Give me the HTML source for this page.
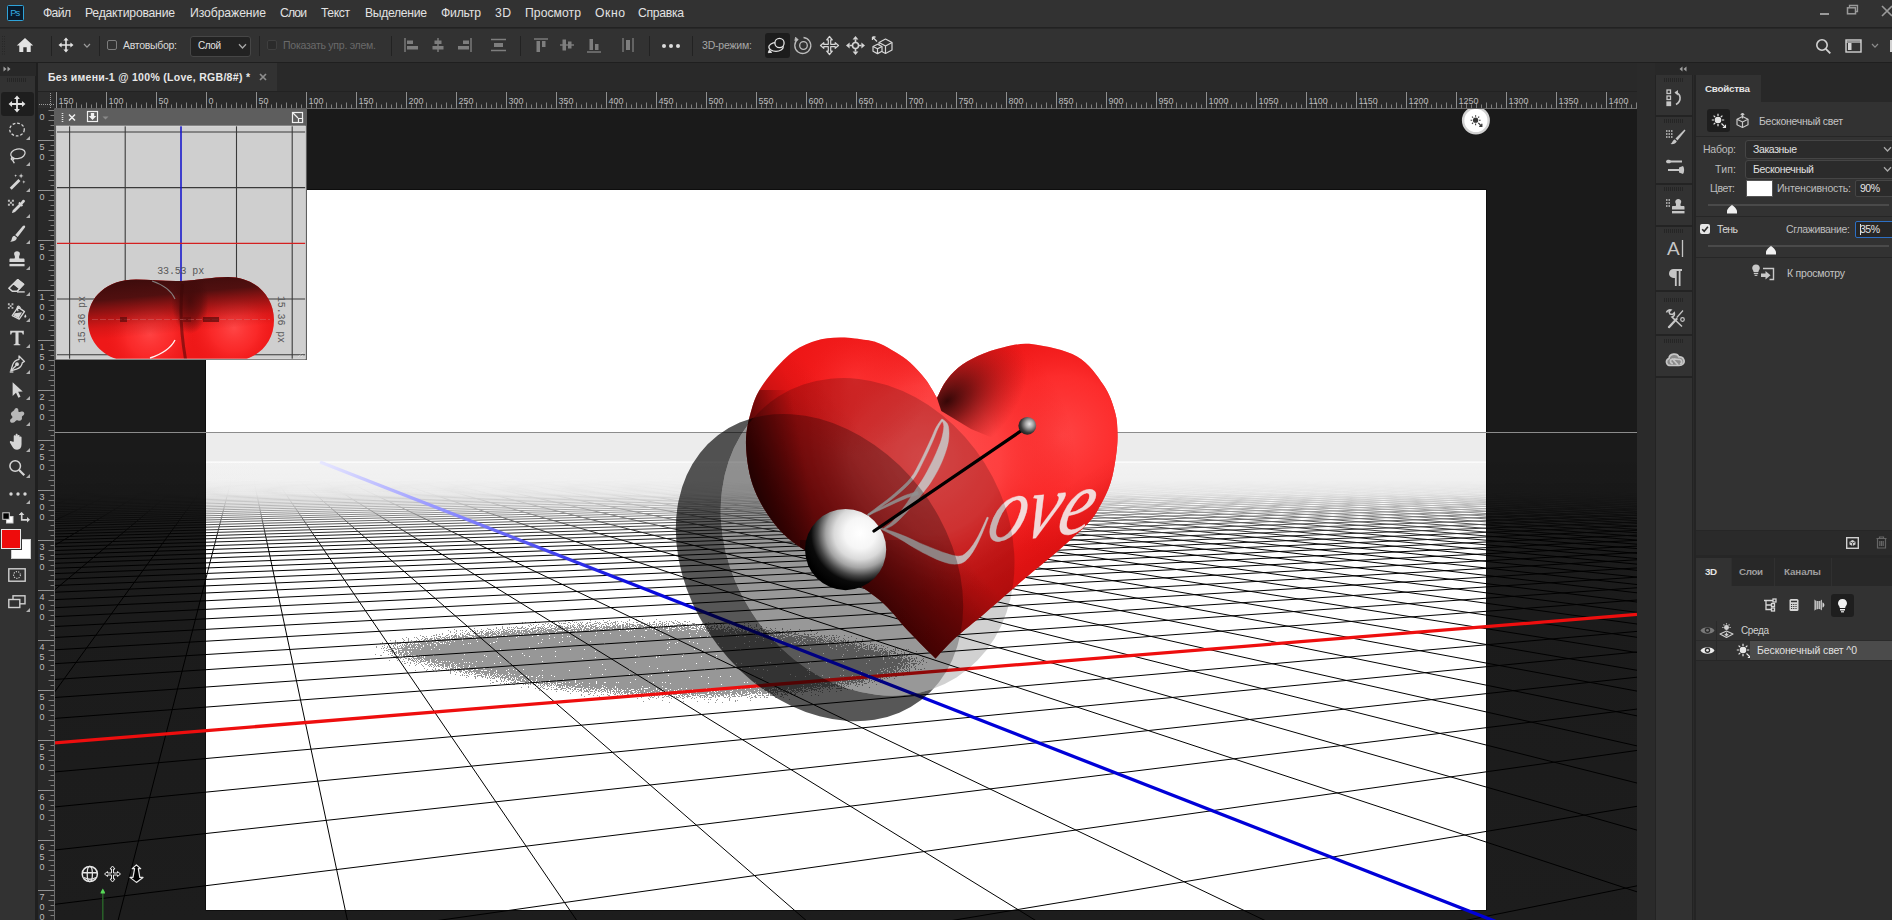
<!DOCTYPE html>
<html><head><meta charset="utf-8"><title>Photoshop</title>
<style>
*{box-sizing:border-box;margin:0;padding:0}
html,body{width:1892px;height:920px;overflow:hidden;background:#282828;font-family:"Liberation Sans",sans-serif;font-size:11px;color:#d6d6d6}
.abs{position:absolute}
.t{position:absolute;white-space:nowrap;line-height:1;transform-origin:0 50%}
.rl{font-family:"Liberation Sans",sans-serif;font-size:9px;fill:#bcbcbc}
#menubar{position:absolute;left:0;top:0;width:1892px;height:28px;background:#323232;border-bottom:1px solid #222}
#optbar{position:absolute;left:0;top:29px;width:1892px;height:34px;background:#323232;border-bottom:1px solid #1f1f1f}
#tabbar{position:absolute;left:36px;top:63px;width:1619px;height:28px;background:#292929}
#tab{position:absolute;left:2px;top:0;width:239px;height:28px;background:#323232}
#tools{position:absolute;left:0;top:63px;width:36px;height:857px;background:#323232}
#toolgap{position:absolute;left:35px;top:63px;width:3px;height:857px;background:#1f1f1f}
.sep{position:absolute;top:36px;width:1px;height:20px;background:#222}
.scene{position:absolute;left:0;top:0}
#rcol{position:absolute;left:1637px;top:63px;width:255px;height:857px;background:#2a2a2a}
</style></head><body>

<svg class="scene" width="1892" height="920" viewBox="0 0 1892 920">
<defs>
<clipPath id="cv"><rect x="55" y="109" width="1582" height="811"/></clipPath>
<clipPath id="doc"><rect x="206" y="190" width="1280" height="720"/></clipPath>
<linearGradient id="fade" x1="0" y1="462" x2="0" y2="552" gradientUnits="userSpaceOnUse">
 <stop offset="0" stop-color="#000"/><stop offset="0.2" stop-color="#060606"/><stop offset="0.35" stop-color="#161616"/><stop offset="0.5" stop-color="#4c4c4c"/><stop offset="0.65" stop-color="#9a9a9a"/><stop offset="0.82" stop-color="#e2e2e2"/><stop offset="1" stop-color="#fff"/></linearGradient>
<mask id="gm" maskUnits="userSpaceOnUse" x="0" y="400" width="1892" height="520"><rect x="0" y="400" width="1892" height="520" fill="url(#fade)"/></mask>
<linearGradient id="haze" x1="0" y1="462" x2="0" y2="520" gradientUnits="userSpaceOnUse">
 <stop offset="0" stop-color="#f2f2f2"/><stop offset="1" stop-color="#ffffff"/></linearGradient>
<linearGradient id="bluefade" x1="320" y1="462" x2="700" y2="610" gradientUnits="userSpaceOnUse">
 <stop offset="0" stop-color="#e8e8ff"/><stop offset="0.35" stop-color="#8a8aff"/><stop offset="0.8" stop-color="#1010e0"/><stop offset="1" stop-color="#0000d8"/></linearGradient>
<linearGradient id="darkground" x1="0" y1="462" x2="0" y2="920" gradientUnits="userSpaceOnUse">
 <stop offset="0" stop-color="#1a1a1a"/><stop offset="1" stop-color="#1d1d1d"/></linearGradient>
</defs>
<g clip-path="url(#cv)">
<rect x="55" y="109" width="1582" height="811" fill="#1a1a1a"/>
<rect x="55" y="462" width="1582" height="458" fill="url(#darkground)"/>
<rect x="205.500" y="189.500" width="1281" height="721" fill="#000"/><rect x="206" y="190" width="1280" height="720" fill="#fff"/>
<rect x="206" y="432" width="1280" height="30" fill="#ececec"/>
<rect x="206" y="462" width="1280" height="60" fill="url(#haze)"/>
<rect x="55" y="432" width="1582" height="1" fill="#8c8c8c"/>
<rect x="206" y="461.5" width="1280" height="1.2" fill="#fff"/>
<defs><filter id="spk" x="300" y="560" width="700" height="200" filterUnits="userSpaceOnUse" color-interpolation-filters="sRGB">
<feGaussianBlur in="SourceAlpha" stdDeviation="16 7" result="b"/>
<feTurbulence type="fractalNoise" baseFrequency="0.85" numOctaves="1" seed="11" result="n"/>
<feColorMatrix in="n" type="matrix" values="0 0 0 0 0  0 0 0 0 0  0 0 0 0 0  1.600 0 0 0 -0.3" result="na"/>
<feComposite in="b" in2="na" operator="arithmetic" k1="0" k2="0.97" k3="1" k4="-0.6" result="c"/>
<feComponentTransfer in="c" result="t"><feFuncA type="discrete" tableValues="0 0 1 1"/></feComponentTransfer>
<feFlood flood-color="#979797"/><feComposite in2="t" operator="in"/>
</filter></defs>
<g filter="url(#spk)"><path d="M368 648C470 626 600 620 690 624C790 628 880 642 932 662C865 692 770 699 690 698C570 696 445 676 368 648Z" fill="#000"/></g>
<g mask="url(#gm)"><path d="M243.5 432.0L-3000.0 524.7M243.5 432.0L-3000.0 525.9M243.5 432.0L-3000.0 527.2M243.5 432.0L-3000.0 528.5M243.5 432.0L-3000.0 529.9M243.5 432.0L-3000.0 531.3M243.5 432.0L-3000.0 532.8M243.5 432.0L-3000.0 534.3M243.5 432.0L-3000.0 535.8M243.5 432.0L-3000.0 537.4M243.5 432.0L-3000.0 539.0M243.5 432.0L-3000.0 540.7M243.5 432.0L-3000.0 542.4M243.5 432.0L-3000.0 544.2M243.5 432.0L-3000.0 546.1M243.5 432.0L-3000.0 548.0M243.5 432.0L-3000.0 550.0M243.5 432.0L-3000.0 552.0M243.5 432.0L-3000.0 554.1M243.5 432.0L-3000.0 556.3M243.5 432.0L-3000.0 558.6M243.5 432.0L-3000.0 561.0M243.5 432.0L-3000.0 563.4M243.5 432.0L-3000.0 566.0M243.5 432.0L-3000.0 568.6M243.5 432.0L-3000.0 571.4M243.5 432.0L-3000.0 574.3M243.5 432.0L-3000.0 577.3M243.5 432.0L-3000.0 580.4M243.5 432.0L-3000.0 583.6M243.5 432.0L-3000.0 587.0M243.5 432.0L-3000.0 590.6M243.5 432.0L-3000.0 594.3M243.5 432.0L-3000.0 598.2M243.5 432.0L-3000.0 602.3M243.5 432.0L-3000.0 606.7M243.5 432.0L-3000.0 611.2M243.5 432.0L-3000.0 616.0M243.5 432.0L-3000.0 621.0M243.5 432.0L-3000.0 626.3M243.5 432.0L-3000.0 631.9M243.5 432.0L-3000.0 637.9M243.5 432.0L-3000.0 644.2M243.5 432.0L-3000.0 650.9M243.5 432.0L-3000.0 658.1M243.5 432.0L-3000.0 665.8M243.5 432.0L-3000.0 674.0M243.5 432.0L-3000.0 682.7M243.5 432.0L-3000.0 692.2M243.5 432.0L-3000.0 702.4M243.5 432.0L-3000.0 713.4M243.5 432.0L-3000.0 725.3M243.5 432.0L-3000.0 738.3M243.5 432.0L-3000.0 752.6M243.5 432.0L-3000.0 768.2M243.5 432.0L-3000.0 785.4M243.5 432.0L-3000.0 804.4M243.5 432.0L-3000.0 825.6M243.5 432.0L-3000.0 849.4M243.5 432.0L-3000.0 876.3M243.5 432.0L-3000.0 906.8M243.5 432.0L-2924.6 930.0M243.5 432.0L-2690.7 930.0M243.5 432.0L-2456.9 930.0M243.5 432.0L-2223.0 930.0M243.5 432.0L-1989.1 930.0M243.5 432.0L-1755.3 930.0M243.5 432.0L-1521.4 930.0M243.5 432.0L-1287.6 930.0M243.5 432.0L-1053.7 930.0M243.5 432.0L-819.8 930.0M243.5 432.0L-586.0 930.0M243.5 432.0L-352.1 930.0M243.5 432.0L-118.3 930.0M243.5 432.0L115.6 930.0M243.5 432.0L349.5 930.0M243.5 432.0L583.3 930.0M243.5 432.0L817.2 930.0M243.5 432.0L1051.1 930.0M243.5 432.0L1284.9 930.0M243.5 432.0L1518.8 930.0M243.5 432.0L1752.6 930.0M243.5 432.0L1986.5 930.0M243.5 432.0L2220.4 930.0M243.5 432.0L2454.2 930.0M243.5 432.0L2688.1 930.0M243.5 432.0L2921.9 930.0M243.5 432.0L3155.8 930.0M243.5 432.0L3389.7 930.0M243.5 432.0L3623.5 930.0M243.5 432.0L3857.4 930.0M243.5 432.0L4091.3 930.0M243.5 432.0L4325.1 930.0M243.5 432.0L4559.0 930.0M243.5 432.0L4792.8 930.0M243.5 432.0L5026.7 930.0M243.5 432.0L5260.6 930.0M243.5 432.0L5494.4 930.0M243.5 432.0L5728.3 930.0M243.5 432.0L5962.1 930.0M243.5 432.0L6000.0 913.6M243.5 432.0L6000.0 895.4M243.5 432.0L6000.0 878.5M243.5 432.0L6000.0 862.8M243.5 432.0L6000.0 848.2M243.5 432.0L6000.0 834.5M243.5 432.0L6000.0 821.7M243.5 432.0L6000.0 809.7M243.5 432.0L6000.0 798.4M243.5 432.0L6000.0 787.8M243.5 432.0L6000.0 777.8M243.5 432.0L6000.0 768.3M243.5 432.0L6000.0 759.3M243.5 432.0L6000.0 750.8M243.5 432.0L6000.0 742.7M243.5 432.0L6000.0 735.0M243.5 432.0L6000.0 727.7M243.5 432.0L6000.0 720.7M243.5 432.0L6000.0 714.1M243.5 432.0L6000.0 707.8M243.5 432.0L6000.0 701.7M243.5 432.0L6000.0 695.9M243.5 432.0L6000.0 690.3M243.5 432.0L6000.0 685.0M243.5 432.0L6000.0 679.9M243.5 432.0L6000.0 675.0M243.5 432.0L6000.0 670.2M243.5 432.0L6000.0 665.7M243.5 432.0L6000.0 661.3M243.5 432.0L6000.0 657.1M243.5 432.0L6000.0 653.1M243.5 432.0L6000.0 649.1M243.5 432.0L6000.0 645.4M243.5 432.0L6000.0 641.7M243.5 432.0L6000.0 638.2M243.5 432.0L6000.0 634.8M243.5 432.0L6000.0 631.5M243.5 432.0L6000.0 628.3M243.5 432.0L6000.0 625.2M243.5 432.0L6000.0 622.2M243.5 432.0L6000.0 619.3M243.5 432.0L6000.0 616.5M243.5 432.0L6000.0 613.7M243.5 432.0L6000.0 611.1M243.5 432.0L6000.0 608.5M243.5 432.0L6000.0 606.0M243.5 432.0L6000.0 603.6M243.5 432.0L6000.0 601.2M243.5 432.0L6000.0 598.9M243.5 432.0L6000.0 596.6M243.5 432.0L6000.0 594.5M243.5 432.0L6000.0 592.3M243.5 432.0L6000.0 590.3M243.5 432.0L6000.0 588.2M243.5 432.0L6000.0 586.3M243.5 432.0L6000.0 584.4M243.5 432.0L6000.0 582.5M243.5 432.0L6000.0 580.7M243.5 432.0L6000.0 578.9M243.5 432.0L6000.0 577.1M243.5 432.0L6000.0 575.5M0.0 460.0L1700.0 447.7M0.0 460.2L1700.0 447.9M0.0 460.4L1700.0 448.0M0.0 460.7L1700.0 448.1M0.0 460.9L1700.0 448.2M0.0 461.1L1700.0 448.4M0.0 461.4L1700.0 448.5M0.0 461.6L1700.0 448.6M0.0 461.8L1700.0 448.8M0.0 462.1L1700.0 448.9M0.0 462.3L1700.0 449.0M0.0 462.6L1700.0 449.2M0.0 462.8L1700.0 449.3M0.0 463.1L1700.0 449.5M0.0 463.3L1700.0 449.6M0.0 463.6L1700.0 449.8M0.0 463.9L1700.0 449.9M0.0 464.2L1700.0 450.1M0.0 464.5L1700.0 450.2M0.0 464.7L1700.0 450.4M0.0 465.0L1700.0 450.6M0.0 465.3L1700.0 450.7M0.0 465.6L1700.0 450.9M0.0 465.9L1700.0 451.1M0.0 466.3L1700.0 451.3M0.0 466.6L1700.0 451.4M0.0 466.9L1700.0 451.6M0.0 467.2L1700.0 451.8M0.0 467.6L1700.0 452.0M0.0 467.9L1700.0 452.2M0.0 468.3L1700.0 452.4M0.0 468.6L1700.0 452.6M0.0 469.0L1700.0 452.8M0.0 469.4L1700.0 453.0M0.0 469.8L1700.0 453.2M0.0 470.2L1700.0 453.4M0.0 470.6L1700.0 453.7M0.0 471.0L1700.0 453.9M0.0 471.4L1700.0 454.1M0.0 471.8L1700.0 454.4M0.0 472.2L1700.0 454.6M0.0 472.7L1700.0 454.9M0.0 473.1L1700.0 455.1M0.0 473.6L1700.0 455.4M0.0 474.1L1700.0 455.6M0.0 474.6L1700.0 455.9M0.0 475.1L1700.0 456.2M0.0 475.6L1700.0 456.5M0.0 476.1L1700.0 456.8M0.0 476.6L1700.0 457.1M0.0 477.2L1700.0 457.4M0.0 477.7L1700.0 457.7M0.0 478.3L1700.0 458.0M0.0 478.9L1700.0 458.4M0.0 479.5L1700.0 458.7M0.0 480.1L1700.0 459.0M0.0 480.7L1700.0 459.4M0.0 481.4L1700.0 459.8M0.0 482.1L1700.0 460.1M0.0 482.8L1700.0 460.5M0.0 483.5L1700.0 460.9M0.0 484.2L1700.0 461.3M0.0 484.9L1700.0 461.8M0.0 485.7L1700.0 462.2M0.0 486.5L1700.0 462.6M0.0 487.3L1700.0 463.1M0.0 488.2L1700.0 463.6M0.0 489.0L1700.0 464.1M0.0 489.9L1700.0 464.6M0.0 490.8L1700.0 465.1M0.0 491.8L1700.0 465.6M0.0 492.8L1700.0 466.2M0.0 493.8L1700.0 466.7M0.0 494.9L1700.0 467.3M0.0 495.9L1700.0 467.9M0.0 497.1L1700.0 468.6M0.0 498.2L1700.0 469.2M0.0 499.5L1700.0 469.9M0.0 500.7L1700.0 470.6M0.0 502.0L1700.0 471.4M0.0 503.4L1700.0 472.1M0.0 504.8L1700.0 472.9M0.0 506.2L1700.0 473.7M0.0 507.8L1700.0 474.6M0.0 509.4L1700.0 475.5M0.0 511.0L1700.0 476.4M0.0 512.7L1700.0 477.4M0.0 514.5L1700.0 478.4M0.0 516.4L1700.0 479.5M0.0 518.4L1700.0 480.6M0.0 520.5L1700.0 481.7M0.0 522.7L1700.0 483.0M0.0 524.9L1700.0 484.2M0.0 527.3L1700.0 485.6M0.0 529.9L1700.0 487.0M0.0 532.5L1700.0 488.5M0.0 535.4L1700.0 490.1M0.0 538.3L1700.0 491.8M0.0 541.5L1700.0 493.5M0.0 544.8L1700.0 495.4M0.0 548.4L1700.0 497.4M0.0 552.2L1700.0 499.6M0.0 556.2L1700.0 501.8M0.0 560.6L1700.0 504.3M0.0 565.2L1700.0 506.9M0.0 570.2L1700.0 509.7M0.0 575.6L1700.0 512.7M0.0 581.4L1700.0 516.0M0.0 587.7L1700.0 519.5M0.0 594.5L1700.0 523.4M0.0 602.0L1700.0 527.6M0.0 610.2L1700.0 532.2M0.0 619.3L1700.0 537.3M0.0 629.3L1700.0 542.9M0.0 640.4L1700.0 549.2M0.0 652.9L1700.0 556.2M0.0 667.0L1700.0 564.1M0.0 683.0L1700.0 573.1M0.0 701.3L1700.0 583.4M0.0 722.5L1700.0 595.3M0.0 747.3L1700.0 609.2M0.0 776.8L1700.0 625.8M0.0 812.3L1700.0 645.8M0.0 856.0L1700.0 670.3M0.0 911.1L1700.0 701.3M0.0 982.6L1700.0 741.5M0.0 1079.2L1700.0 795.8M0.0 1216.8L1700.0 873.1M0.0 1428.8L1700.0 992.3M0.0 1797.8L1700.0 1199.7M0.0 2600.5L1700.0 1650.9M0.0 5691.2L1700.0 3388.1" stroke="#000" stroke-width="1" fill="none"/></g>
<path d="M55 742.9L1637 614.4" stroke="#ee0e0e" stroke-width="3.3" fill="none"/>
<path d="M320 462L1530 934.9" stroke="url(#bluefade)" stroke-width="3.3" fill="none"/>
<defs>
<clipPath id="hc"><path d="M937.0 398.0C938.4 395.4 941.7 387.2 945.2 382.2C948.7 377.2 952.8 372.2 958.2 367.8C963.6 363.4 970.2 359.4 977.8 356.0C985.4 352.6 994.7 349.1 1003.9 347.2C1013.1 345.2 1020.8 342.8 1033.0 344.3C1045.2 345.9 1065.2 349.7 1077.0 356.5C1088.8 363.3 1097.2 375.8 1103.5 385.0C1109.8 394.2 1112.7 403.8 1115.0 412.0C1117.3 420.2 1117.3 426.7 1117.5 434.0C1117.7 441.3 1117.2 447.8 1116.0 456.0C1114.8 464.2 1113.2 474.7 1110.5 483.0C1107.8 491.3 1103.8 499.2 1100.0 506.0C1096.2 512.8 1095.0 515.8 1087.8 523.5C1080.5 531.2 1066.9 543.1 1056.5 552.2C1046.1 561.3 1036.9 568.3 1025.2 578.3C1013.5 588.3 997.8 602.2 986.1 612.2C974.4 622.2 963.2 630.6 954.8 638.3C946.4 646.0 938.7 655.1 935.5 658.5C930.9 653.8 917.2 640.3 907.8 630.5C898.4 620.7 892.0 610.2 879.0 599.5C866.0 588.8 845.9 576.9 830.0 566.0C814.1 555.1 796.0 546.5 783.5 534.0C771.0 521.5 761.2 505.8 755.0 491.0C748.8 476.2 746.5 458.8 746.0 445.0C745.5 431.2 749.0 418.3 752.0 408.0C755.0 397.7 757.7 392.0 764.0 383.0C770.3 374.0 781.5 361.0 790.0 354.0C798.5 347.0 806.7 343.8 815.0 341.0C823.3 338.2 831.5 337.7 840.0 337.5C848.5 337.3 859.3 339.0 866.0 340.0C872.7 341.0 875.0 341.6 880.0 343.7C885.0 345.8 891.0 349.4 896.0 352.5C901.0 355.6 905.1 358.1 910.0 362.6C914.9 367.1 921.1 373.6 925.6 379.5C930.1 385.4 935.1 394.9 937.0 398.0Z"/></clipPath>
<clipPath id="cY"><ellipse cx="867.6" cy="536.9" rx="138.4" ry="166.3" transform="rotate(-32.3 867.6 536.9)" /></clipPath>
<mask id="mNotY" maskUnits="userSpaceOnUse" x="600" y="300" width="500" height="500"><rect x="600" y="300" width="500" height="500" fill="#fff"/><ellipse cx="867.6" cy="536.9" rx="138.4" ry="166.3" transform="rotate(-32.3 867.6 536.9)" fill="#000"/></mask>
<radialGradient id="hlR" cx="1062" cy="436" r="120" gradientUnits="userSpaceOnUse"><stop offset="0" stop-color="#ff4444"/><stop offset="0.5" stop-color="#ff3030" stop-opacity=".85"/><stop offset="1" stop-color="#f01818" stop-opacity="0"/></radialGradient>
<radialGradient id="hlL" cx="925" cy="460" r="150" gradientUnits="userSpaceOnUse"><stop offset="0" stop-color="#ff5858"/><stop offset="0.5" stop-color="#ff4444" stop-opacity=".85"/><stop offset="1" stop-color="#f01818" stop-opacity="0"/></radialGradient>
<radialGradient id="hlT" cx="855" cy="380" r="75" gradientUnits="userSpaceOnUse"><stop offset="0" stop-color="#ff3434" stop-opacity=".7"/><stop offset="1" stop-color="#f01818" stop-opacity="0"/></radialGradient>
<linearGradient id="shL" x1="756" y1="585" x2="930" y2="440" gradientUnits="userSpaceOnUse"><stop offset="0" stop-color="#1c0000" stop-opacity=".82"/><stop offset="0.25" stop-color="#2a0000" stop-opacity=".62"/><stop offset="0.5" stop-color="#400000" stop-opacity=".3"/><stop offset="0.7" stop-color="#500000" stop-opacity=".06"/><stop offset="0.8" stop-color="#500000" stop-opacity="0"/></linearGradient>
<linearGradient id="shT" x1="905" y1="665" x2="985" y2="580" gradientUnits="userSpaceOnUse"><stop offset="0" stop-color="#1a0000" stop-opacity=".6"/><stop offset="0.5" stop-color="#300000" stop-opacity=".3"/><stop offset="1" stop-color="#400000" stop-opacity="0"/></linearGradient>
<linearGradient id="shE" x1="746" y1="450" x2="800" y2="440" gradientUnits="userSpaceOnUse"><stop offset="0" stop-color="#100000" stop-opacity=".6"/><stop offset="1" stop-color="#100000" stop-opacity="0"/></linearGradient>
<radialGradient id="shC" cx="947" cy="401" r="92" gradientUnits="userSpaceOnUse" gradientTransform="rotate(-38 947 401) scale(1 0.62) translate(0 246)"><stop offset="0" stop-color="#240202" stop-opacity=".92"/><stop offset="0.3" stop-color="#4a0505" stop-opacity=".7"/><stop offset="0.65" stop-color="#700808" stop-opacity=".35"/><stop offset="1" stop-color="#8a0a0a" stop-opacity="0"/></radialGradient>
<clipPath id="rl"><path d="M937 398L941.300 411L971 429L1000 441L1060 450V330H937Z"/></clipPath>
<linearGradient id="shB" x1="1010" y1="520" x2="1060" y2="600" gradientUnits="userSpaceOnUse"><stop offset="0" stop-color="#900000" stop-opacity="0"/><stop offset="1" stop-color="#900000" stop-opacity=".35"/></linearGradient>
<radialGradient id="sph" cx="0.68" cy="0.3" r="0.73" fx="0.68" fy="0.3"><stop offset="0" stop-color="#ffffff"/><stop offset="0.26" stop-color="#f6f6f6"/><stop offset="0.44" stop-color="#dadada"/><stop offset="0.58" stop-color="#a4a4a4"/><stop offset="0.72" stop-color="#444"/><stop offset="0.83" stop-color="#0a0a0a"/><stop offset="1" stop-color="#000"/></radialGradient>
<radialGradient id="sph2" cx="0.62" cy="0.4" r="0.7" fx="0.62" fy="0.4"><stop offset="0" stop-color="#e6e6e6"/><stop offset="0.3" stop-color="#a8a8a8"/><stop offset="0.7" stop-color="#3a3a3a"/><stop offset="1" stop-color="#141414"/></radialGradient>
</defs>
<path d="M937.0 398.0C938.4 395.4 941.7 387.2 945.2 382.2C948.7 377.2 952.8 372.2 958.2 367.8C963.6 363.4 970.2 359.4 977.8 356.0C985.4 352.6 994.7 349.1 1003.9 347.2C1013.1 345.2 1020.8 342.8 1033.0 344.3C1045.2 345.9 1065.2 349.7 1077.0 356.5C1088.8 363.3 1097.2 375.8 1103.5 385.0C1109.8 394.2 1112.7 403.8 1115.0 412.0C1117.3 420.2 1117.3 426.7 1117.5 434.0C1117.7 441.3 1117.2 447.8 1116.0 456.0C1114.8 464.2 1113.2 474.7 1110.5 483.0C1107.8 491.3 1103.8 499.2 1100.0 506.0C1096.2 512.8 1095.0 515.8 1087.8 523.5C1080.5 531.2 1066.9 543.1 1056.5 552.2C1046.1 561.3 1036.9 568.3 1025.2 578.3C1013.5 588.3 997.8 602.2 986.1 612.2C974.4 622.2 963.2 630.6 954.8 638.3C946.4 646.0 938.7 655.1 935.5 658.5C930.9 653.8 917.2 640.3 907.8 630.5C898.4 620.7 892.0 610.2 879.0 599.5C866.0 588.8 845.9 576.9 830.0 566.0C814.1 555.1 796.0 546.5 783.5 534.0C771.0 521.5 761.2 505.8 755.0 491.0C748.8 476.2 746.5 458.8 746.0 445.0C745.5 431.2 749.0 418.3 752.0 408.0C755.0 397.7 757.7 392.0 764.0 383.0C770.3 374.0 781.5 361.0 790.0 354.0C798.5 347.0 806.7 343.8 815.0 341.0C823.3 338.2 831.5 337.7 840.0 337.5C848.5 337.3 859.3 339.0 866.0 340.0C872.7 341.0 875.0 341.6 880.0 343.7C885.0 345.8 891.0 349.4 896.0 352.5C901.0 355.6 905.1 358.1 910.0 362.6C914.9 367.1 921.1 373.6 925.6 379.5C930.1 385.4 935.1 394.9 937.0 398.0Z" fill="#ee1616"/>
<g clip-path="url(#hc)">
<rect x="740" y="330" width="390" height="340" fill="url(#hlR)"/>
<rect x="740" y="330" width="390" height="340" fill="url(#hlL)"/>
<rect x="740" y="330" width="390" height="340" fill="url(#hlT)"/>
<rect x="740" y="330" width="390" height="340" fill="url(#shL)"/>
<rect x="740" y="390" width="80" height="200" fill="url(#shE)"/>
<rect x="800" y="540" width="250" height="130" fill="url(#shT)"/>
<g clip-path="url(#rl)"><rect x="740" y="330" width="390" height="340" fill="url(#shC)"/></g>
<rect x="740" y="330" width="390" height="340" fill="url(#shB)"/>
<g fill="#f2f2f2" fill-opacity=".88" stroke="#f2f2f2" stroke-opacity=".5" stroke-width=".8">
<text transform="translate(984 542) rotate(-5.5) skewX(-21)" font-family="Liberation Serif" font-style="italic" font-size="90" textLength="104" lengthAdjust="spacingAndGlyphs">ove</text>
<path d="M868.5 515.7C870.5 514.3 876.1 510.7 880.7 507.4C885.2 504.1 890.5 500.6 895.9 496.0C901.2 491.4 908.2 485.6 912.8 479.9C917.4 474.1 920.0 468.0 923.2 461.6C926.5 455.3 930.0 447.4 932.5 441.8C934.9 436.3 936.3 432.1 938.0 428.5C939.7 424.9 942.1 421.4 942.9 420.0L941.5 419.2C940.6 420.6 937.9 423.9 936.0 427.5C934.1 431.1 932.7 435.3 930.1 440.8C927.6 446.2 924.0 454.1 920.8 460.4C917.5 466.6 915.0 472.5 910.6 478.1C906.2 483.7 899.4 489.4 894.1 494.0C888.9 498.6 883.8 502.2 879.3 505.6C874.9 509.0 869.5 512.9 867.5 514.3Z"/>
<path d="M917.5 491.4C915.1 492.2 908.8 493.8 903.4 496.1C898.1 498.4 891.5 502.0 885.5 505.0C879.6 508.1 870.7 512.8 867.7 514.4L868.3 515.6C871.3 514.2 880.4 509.8 886.5 507.0C892.5 504.2 899.2 501.0 904.6 498.9C909.9 496.8 916.2 495.3 918.5 494.6Z"/>
<path d="M941.6 420.0C941.9 421.0 943.8 423.1 943.8 426.3C943.8 429.5 942.8 434.8 941.5 439.3C940.2 443.8 937.9 449.0 936.0 453.4C934.1 457.9 932.1 461.8 930.0 465.9C927.9 470.1 925.9 473.9 923.4 478.1C920.9 482.2 917.6 486.7 914.9 490.8C912.2 494.8 909.9 498.4 907.2 502.4C904.4 506.4 901.0 511.1 898.4 514.5C895.7 517.9 893.7 520.4 891.3 522.7C888.8 525.0 884.9 527.4 883.6 528.3L884.4 529.7C885.9 528.9 890.3 527.1 893.1 525.1C896.0 523.0 898.5 520.6 901.6 517.5C904.8 514.3 908.8 509.9 912.0 506.2C915.3 502.5 918.0 499.2 921.1 495.2C924.2 491.3 927.8 486.9 930.6 482.7C933.4 478.5 935.8 474.4 938.0 470.1C940.2 465.7 942.2 461.5 944.0 456.6C945.8 451.7 947.8 445.9 948.5 440.7C949.2 435.6 949.2 429.3 948.2 425.7C947.3 422.1 943.7 420.3 942.8 419.2Z"/>
<path d="M879.7 528.6C881.7 529.6 887.3 532.3 891.4 534.5C895.4 536.6 899.9 539.0 904.0 541.4C908.2 543.9 912.2 546.7 916.4 549.1C920.7 551.6 925.4 554.0 929.6 556.0C933.8 558.1 937.7 559.9 941.5 561.2C945.3 562.6 949.0 563.8 952.4 564.1C955.8 564.3 959.3 564.0 962.0 563.0C964.6 562.0 966.4 560.0 968.3 558.0C970.3 555.9 972.0 553.3 973.6 550.7C975.3 548.0 976.8 545.2 978.3 542.0C979.9 538.8 981.3 535.5 983.0 531.5C984.7 527.4 987.6 520.0 988.5 517.7L987.1 517.1C986.1 519.3 982.9 526.6 981.0 530.5C979.1 534.5 977.5 537.6 975.7 540.6C973.9 543.6 972.2 546.1 970.4 548.3C968.5 550.6 966.4 552.7 964.7 554.0C963.0 555.3 961.9 555.8 960.0 556.0C958.2 556.3 956.2 556.1 953.6 555.5C951.0 555.0 947.9 554.0 944.5 552.8C941.1 551.6 937.1 550.0 933.0 548.4C928.8 546.7 924.0 544.8 919.6 542.9C915.1 540.9 910.9 538.7 906.4 536.8C901.9 534.9 897.0 533.1 892.6 531.5C888.3 530.0 882.3 528.1 880.3 527.4Z"/>
</g>
</g>
<ellipse cx="867.6" cy="536.9" rx="138.4" ry="166.3" transform="rotate(-32.3 867.6 536.9)" fill="#000" fill-opacity=".18"/>
<g clip-path="url(#cY)"><ellipse cx="819.5" cy="567.6" rx="128.1" ry="166.9" transform="rotate(-37.5 819.5 567.6)" fill="#000" fill-opacity=".27"/></g>
<g mask="url(#mNotY)"><ellipse cx="819.5" cy="567.6" rx="128.1" ry="166.9" transform="rotate(-37.5 819.5 567.6)" fill="#000" fill-opacity=".66"/></g>
<circle cx="845.600" cy="549.600" r="40.600" fill="url(#sph)"/>
<path d="M874 531L1026 427.500" stroke="#000" stroke-width="3.200" stroke-linecap="round"/>
<circle cx="1027.300" cy="425.800" r="8.900" fill="url(#sph2)"/><circle cx="1475.900" cy="120.500" r="12.800" fill="#ffffff" stroke="#d2d2d2" stroke-width="2.400"/>
<g stroke="#3a3a3a" stroke-width="1.100"><circle cx="1475.600" cy="120.200" r="2.100" fill="#333"/><path d="M1475.600 115.200V116.800M1475.600 123.600V125.200M1470.600 120.200H1472.200M1479 120.200H1480.600M1472 116.600L1473.100 117.700M1479.200 116.600L1478.100 117.700M1472 123.800L1473.100 122.700"/><path d="M1478.300 122.900L1481.600 126.200M1481.800 123.800V126.400H1479.200" stroke-width="1.300" fill="none"/></g>
<g fill="none" stroke="#e6e6e6" stroke-width="1.200"><circle cx="89.800" cy="874" r="7.600" stroke-width="1.500"/><ellipse cx="89.800" cy="874" rx="2.600" ry="7.600" stroke-width="1.300"/><path d="M82.500 872.800H97M84 877.500C87.500 879.500 92.500 879.500 96 877.500" stroke-width="1.400"/></g>
<g fill="none" stroke="#e6e6e6" stroke-width="1" stroke-linejoin="round"><path d="M112.500 866L115 869H113.500V873H117.500V871.500L120.500 874L117.500 876.500V875H113.500V879H115L112.500 882L110 879H111.500V875H107.500V876.500L104.500 874L107.500 871.500V873H111.500V869H110Z"/></g>
<path d="M136.400 864.900L140.700 868.700H138.300L139.800 877.400H143L136.400 882.400L130 877.400H133L134.600 868.700H132.200Z" fill="#000" stroke="#e6e6e6" stroke-width="1.200" stroke-linejoin="round"/>
<path d="M102.800 892V920" stroke="#2a662a" stroke-width="1.400"/><path d="M102.800 888.500C104 890.500 105.200 892 105 893.500H100.600C100.400 892 101.600 890.500 102.800 888.500Z" fill="#58d858"/>
</g>
</svg>
<svg class="abs" style="left:38px;top:91px" width="1599" height="18" viewBox="38 91 1599 18">
<rect x="38" y="91" width="1599" height="18" fill="#292929"/>
<rect x="38" y="91" width="1599" height="1" fill="#222"/>
<rect x="38" y="92" width="16.500" height="16" fill="#2e2e2e"/>
<rect x="54.500" y="108" width="1582.500" height="1" fill="#6c6c6c"/>
<path d="M39 104.500H54M50.500 93V108" stroke="#9a9a9a" stroke-width="1" stroke-dasharray="1 1" fill="none"/>
<path d="M56.500 92V108M106.500 92V108M156.500 92V108M206.500 92V108M256.500 92V108M306.500 92V108M356.500 92V108M406.500 92V108M456.500 92V108M506.500 92V108M556.500 92V108M606.500 92V108M656.500 92V108M706.500 92V108M756.500 92V108M806.500 92V108M856.500 92V108M906.500 92V108M956.500 92V108M1006.500 92V108M1056.500 92V108M1106.500 92V108M1156.500 92V108M1206.500 92V108M1256.500 92V108M1306.500 92V108M1356.500 92V108M1406.500 92V108M1456.500 92V108M1506.500 92V108M1556.500 92V108M1606.500 92V108" stroke="#8e8e8e" stroke-width="1"/>
<path d="M66.500 102.500V108M76.500 102.500V108M86.500 102.500V108M96.500 102.500V108M116.500 102.500V108M126.500 102.500V108M136.500 102.500V108M146.500 102.500V108M166.500 102.500V108M176.500 102.500V108M186.500 102.500V108M196.500 102.500V108M216.500 102.500V108M226.500 102.500V108M236.500 102.500V108M246.500 102.500V108M266.500 102.500V108M276.500 102.500V108M286.500 102.500V108M296.500 102.500V108M316.500 102.500V108M326.500 102.500V108M336.500 102.500V108M346.500 102.500V108M366.500 102.500V108M376.500 102.500V108M386.500 102.500V108M396.500 102.500V108M416.500 102.500V108M426.500 102.500V108M436.500 102.500V108M446.500 102.500V108M466.500 102.500V108M476.500 102.500V108M486.500 102.500V108M496.500 102.500V108M516.500 102.500V108M526.500 102.500V108M536.500 102.500V108M546.500 102.500V108M566.500 102.500V108M576.500 102.500V108M586.500 102.500V108M596.500 102.500V108M616.500 102.500V108M626.500 102.500V108M636.500 102.500V108M646.500 102.500V108M666.500 102.500V108M676.500 102.500V108M686.500 102.500V108M696.500 102.500V108M716.500 102.500V108M726.500 102.500V108M736.500 102.500V108M746.500 102.500V108M766.500 102.500V108M776.500 102.500V108M786.500 102.500V108M796.500 102.500V108M816.500 102.500V108M826.500 102.500V108M836.500 102.500V108M846.500 102.500V108M866.500 102.500V108M876.500 102.500V108M886.500 102.500V108M896.500 102.500V108M916.500 102.500V108M926.500 102.500V108M936.500 102.500V108M946.500 102.500V108M966.500 102.500V108M976.500 102.500V108M986.500 102.500V108M996.500 102.500V108M1016.500 102.500V108M1026.500 102.500V108M1036.500 102.500V108M1046.500 102.500V108M1066.500 102.500V108M1076.500 102.500V108M1086.500 102.500V108M1096.500 102.500V108M1116.500 102.500V108M1126.500 102.500V108M1136.500 102.500V108M1146.500 102.500V108M1166.500 102.500V108M1176.500 102.500V108M1186.500 102.500V108M1196.500 102.500V108M1216.500 102.500V108M1226.500 102.500V108M1236.500 102.500V108M1246.500 102.500V108M1266.500 102.500V108M1276.500 102.500V108M1286.500 102.500V108M1296.500 102.500V108M1316.500 102.500V108M1326.500 102.500V108M1336.500 102.500V108M1346.500 102.500V108M1366.500 102.500V108M1376.500 102.500V108M1386.500 102.500V108M1396.500 102.500V108M1416.500 102.500V108M1426.500 102.500V108M1436.500 102.500V108M1446.500 102.500V108M1466.500 102.500V108M1476.500 102.500V108M1486.500 102.500V108M1496.500 102.500V108M1516.500 102.500V108M1526.500 102.500V108M1536.500 102.500V108M1546.500 102.500V108M1566.500 102.500V108M1576.500 102.500V108M1586.500 102.500V108M1596.500 102.500V108M1616.500 102.500V108M1626.500 102.500V108M1636.500 102.500V108M61.500 104.500V108M71.500 104.500V108M81.500 104.500V108M91.500 104.500V108M101.500 104.500V108M111.500 104.500V108M121.500 104.500V108M131.500 104.500V108M141.500 104.500V108M151.500 104.500V108M161.500 104.500V108M171.500 104.500V108M181.500 104.500V108M191.500 104.500V108M201.500 104.500V108M211.500 104.500V108M221.500 104.500V108M231.500 104.500V108M241.500 104.500V108M251.500 104.500V108M261.500 104.500V108M271.500 104.500V108M281.500 104.500V108M291.500 104.500V108M301.500 104.500V108M311.500 104.500V108M321.500 104.500V108M331.500 104.500V108M341.500 104.500V108M351.500 104.500V108M361.500 104.500V108M371.500 104.500V108M381.500 104.500V108M391.500 104.500V108M401.500 104.500V108M411.500 104.500V108M421.500 104.500V108M431.500 104.500V108M441.500 104.500V108M451.500 104.500V108M461.500 104.500V108M471.500 104.500V108M481.500 104.500V108M491.500 104.500V108M501.500 104.500V108M511.500 104.500V108M521.500 104.500V108M531.500 104.500V108M541.500 104.500V108M551.500 104.500V108M561.500 104.500V108M571.500 104.500V108M581.500 104.500V108M591.500 104.500V108M601.500 104.500V108M611.500 104.500V108M621.500 104.500V108M631.500 104.500V108M641.500 104.500V108M651.500 104.500V108M661.500 104.500V108M671.500 104.500V108M681.500 104.500V108M691.500 104.500V108M701.500 104.500V108M711.500 104.500V108M721.500 104.500V108M731.500 104.500V108M741.500 104.500V108M751.500 104.500V108M761.500 104.500V108M771.500 104.500V108M781.500 104.500V108M791.500 104.500V108M801.500 104.500V108M811.500 104.500V108M821.500 104.500V108M831.500 104.500V108M841.500 104.500V108M851.500 104.500V108M861.500 104.500V108M871.500 104.500V108M881.500 104.500V108M891.500 104.500V108M901.500 104.500V108M911.500 104.500V108M921.500 104.500V108M931.500 104.500V108M941.500 104.500V108M951.500 104.500V108M961.500 104.500V108M971.500 104.500V108M981.500 104.500V108M991.500 104.500V108M1001.500 104.500V108M1011.500 104.500V108M1021.500 104.500V108M1031.500 104.500V108M1041.500 104.500V108M1051.500 104.500V108M1061.500 104.500V108M1071.500 104.500V108M1081.500 104.500V108M1091.500 104.500V108M1101.500 104.500V108M1111.500 104.500V108M1121.500 104.500V108M1131.500 104.500V108M1141.500 104.500V108M1151.500 104.500V108M1161.500 104.500V108M1171.500 104.500V108M1181.500 104.500V108M1191.500 104.500V108M1201.500 104.500V108M1211.500 104.500V108M1221.500 104.500V108M1231.500 104.500V108M1241.500 104.500V108M1251.500 104.500V108M1261.500 104.500V108M1271.500 104.500V108M1281.500 104.500V108M1291.500 104.500V108M1301.500 104.500V108M1311.500 104.500V108M1321.500 104.500V108M1331.500 104.500V108M1341.500 104.500V108M1351.500 104.500V108M1361.500 104.500V108M1371.500 104.500V108M1381.500 104.500V108M1391.500 104.500V108M1401.500 104.500V108M1411.500 104.500V108M1421.500 104.500V108M1431.500 104.500V108M1441.500 104.500V108M1451.500 104.500V108M1461.500 104.500V108M1471.500 104.500V108M1481.500 104.500V108M1491.500 104.500V108M1501.500 104.500V108M1511.500 104.500V108M1521.500 104.500V108M1531.500 104.500V108M1541.500 104.500V108M1551.500 104.500V108M1561.500 104.500V108M1571.500 104.500V108M1581.500 104.500V108M1591.500 104.500V108M1601.500 104.500V108M1611.500 104.500V108M1621.500 104.500V108M1631.500 104.500V108" stroke="#808080" stroke-width="1"/>
<text x="58.5" y="103.800" class="rl">150</text>
<text x="108.5" y="103.800" class="rl">100</text>
<text x="158.5" y="103.800" class="rl">50</text>
<text x="208.5" y="103.800" class="rl">0</text>
<text x="258.5" y="103.800" class="rl">50</text>
<text x="308.5" y="103.800" class="rl">100</text>
<text x="358.5" y="103.800" class="rl">150</text>
<text x="408.5" y="103.800" class="rl">200</text>
<text x="458.5" y="103.800" class="rl">250</text>
<text x="508.5" y="103.800" class="rl">300</text>
<text x="558.5" y="103.800" class="rl">350</text>
<text x="608.5" y="103.800" class="rl">400</text>
<text x="658.5" y="103.800" class="rl">450</text>
<text x="708.5" y="103.800" class="rl">500</text>
<text x="758.5" y="103.800" class="rl">550</text>
<text x="808.5" y="103.800" class="rl">600</text>
<text x="858.5" y="103.800" class="rl">650</text>
<text x="908.5" y="103.800" class="rl">700</text>
<text x="958.5" y="103.800" class="rl">750</text>
<text x="1008.5" y="103.800" class="rl">800</text>
<text x="1058.5" y="103.800" class="rl">850</text>
<text x="1108.5" y="103.800" class="rl">900</text>
<text x="1158.5" y="103.800" class="rl">950</text>
<text x="1208.5" y="103.800" class="rl">1000</text>
<text x="1258.5" y="103.800" class="rl">1050</text>
<text x="1308.5" y="103.800" class="rl">1100</text>
<text x="1358.5" y="103.800" class="rl">1150</text>
<text x="1408.5" y="103.800" class="rl">1200</text>
<text x="1458.5" y="103.800" class="rl">1250</text>
<text x="1508.5" y="103.800" class="rl">1300</text>
<text x="1558.5" y="103.800" class="rl">1350</text>
<text x="1608.5" y="103.800" class="rl">1400</text>
</svg>
<svg class="abs" style="left:38px;top:109px" width="17" height="811" viewBox="38 109 17 811">
<rect x="38" y="109" width="17" height="811" fill="#292929"/>
<rect x="54" y="109" width="1" height="811" fill="#6c6c6c"/>
<path d="M38 140.500H54M38 190.500H54M38 240.500H54M38 290.500H54M38 340.500H54M38 390.500H54M38 440.500H54M38 490.500H54M38 540.500H54M38 590.500H54M38 640.500H54M38 690.500H54M38 740.500H54M38 790.500H54M38 840.500H54M38 890.500H54" stroke="#8e8e8e" stroke-width="1"/>
<path d="M48.500 110.500H54M50.500 115.500H54M48.500 120.500H54M50.500 125.500H54M48.500 130.500H54M50.500 135.500H54M50.500 145.500H54M48.500 150.500H54M50.500 155.500H54M48.500 160.500H54M50.500 165.500H54M48.500 170.500H54M50.500 175.500H54M48.500 180.500H54M50.500 185.500H54M50.500 195.500H54M48.500 200.500H54M50.500 205.500H54M48.500 210.500H54M50.500 215.500H54M48.500 220.500H54M50.500 225.500H54M48.500 230.500H54M50.500 235.500H54M50.500 245.500H54M48.500 250.500H54M50.500 255.500H54M48.500 260.500H54M50.500 265.500H54M48.500 270.500H54M50.500 275.500H54M48.500 280.500H54M50.500 285.500H54M50.500 295.500H54M48.500 300.500H54M50.500 305.500H54M48.500 310.500H54M50.500 315.500H54M48.500 320.500H54M50.500 325.500H54M48.500 330.500H54M50.500 335.500H54M50.500 345.500H54M48.500 350.500H54M50.500 355.500H54M48.500 360.500H54M50.500 365.500H54M48.500 370.500H54M50.500 375.500H54M48.500 380.500H54M50.500 385.500H54M50.500 395.500H54M48.500 400.500H54M50.500 405.500H54M48.500 410.500H54M50.500 415.500H54M48.500 420.500H54M50.500 425.500H54M48.500 430.500H54M50.500 435.500H54M50.500 445.500H54M48.500 450.500H54M50.500 455.500H54M48.500 460.500H54M50.500 465.500H54M48.500 470.500H54M50.500 475.500H54M48.500 480.500H54M50.500 485.500H54M50.500 495.500H54M48.500 500.500H54M50.500 505.500H54M48.500 510.500H54M50.500 515.500H54M48.500 520.500H54M50.500 525.500H54M48.500 530.500H54M50.500 535.500H54M50.500 545.500H54M48.500 550.500H54M50.500 555.500H54M48.500 560.500H54M50.500 565.500H54M48.500 570.500H54M50.500 575.500H54M48.500 580.500H54M50.500 585.500H54M50.500 595.500H54M48.500 600.500H54M50.500 605.500H54M48.500 610.500H54M50.500 615.500H54M48.500 620.500H54M50.500 625.500H54M48.500 630.500H54M50.500 635.500H54M50.500 645.500H54M48.500 650.500H54M50.500 655.500H54M48.500 660.500H54M50.500 665.500H54M48.500 670.500H54M50.500 675.500H54M48.500 680.500H54M50.500 685.500H54M50.500 695.500H54M48.500 700.500H54M50.500 705.500H54M48.500 710.500H54M50.500 715.500H54M48.500 720.500H54M50.500 725.500H54M48.500 730.500H54M50.500 735.500H54M50.500 745.500H54M48.500 750.500H54M50.500 755.500H54M48.500 760.500H54M50.500 765.500H54M48.500 770.500H54M50.500 775.500H54M48.500 780.500H54M50.500 785.500H54M50.500 795.500H54M48.500 800.500H54M50.500 805.500H54M48.500 810.500H54M50.500 815.500H54M48.500 820.500H54M50.500 825.500H54M48.500 830.500H54M50.500 835.500H54M50.500 845.500H54M48.500 850.500H54M50.500 855.500H54M48.500 860.500H54M50.500 865.500H54M48.500 870.500H54M50.500 875.500H54M48.500 880.500H54M50.500 885.500H54M50.500 895.500H54M48.500 900.500H54M50.500 905.500H54M48.500 910.500H54M50.500 915.500H54M48.500 920.500H54" stroke="#808080" stroke-width="1"/>
<text x="39.500" y="120" class="rl">0</text>
<text x="39.500" y="150" class="rl">5</text>
<text x="39.500" y="160" class="rl">0</text>
<text x="39.500" y="200" class="rl">0</text>
<text x="39.500" y="250" class="rl">5</text>
<text x="39.500" y="260" class="rl">0</text>
<text x="39.500" y="300" class="rl">1</text>
<text x="39.500" y="310" class="rl">0</text>
<text x="39.500" y="320" class="rl">0</text>
<text x="39.500" y="350" class="rl">1</text>
<text x="39.500" y="360" class="rl">5</text>
<text x="39.500" y="370" class="rl">0</text>
<text x="39.500" y="400" class="rl">2</text>
<text x="39.500" y="410" class="rl">0</text>
<text x="39.500" y="420" class="rl">0</text>
<text x="39.500" y="450" class="rl">2</text>
<text x="39.500" y="460" class="rl">5</text>
<text x="39.500" y="470" class="rl">0</text>
<text x="39.500" y="500" class="rl">3</text>
<text x="39.500" y="510" class="rl">0</text>
<text x="39.500" y="520" class="rl">0</text>
<text x="39.500" y="550" class="rl">3</text>
<text x="39.500" y="560" class="rl">5</text>
<text x="39.500" y="570" class="rl">0</text>
<text x="39.500" y="600" class="rl">4</text>
<text x="39.500" y="610" class="rl">0</text>
<text x="39.500" y="620" class="rl">0</text>
<text x="39.500" y="650" class="rl">4</text>
<text x="39.500" y="660" class="rl">5</text>
<text x="39.500" y="670" class="rl">0</text>
<text x="39.500" y="700" class="rl">5</text>
<text x="39.500" y="710" class="rl">0</text>
<text x="39.500" y="720" class="rl">0</text>
<text x="39.500" y="750" class="rl">5</text>
<text x="39.500" y="760" class="rl">5</text>
<text x="39.500" y="770" class="rl">0</text>
<text x="39.500" y="800" class="rl">6</text>
<text x="39.500" y="810" class="rl">0</text>
<text x="39.500" y="820" class="rl">0</text>
<text x="39.500" y="850" class="rl">6</text>
<text x="39.500" y="860" class="rl">5</text>
<text x="39.500" y="870" class="rl">0</text>
<text x="39.500" y="900" class="rl">7</text>
<text x="39.500" y="910" class="rl">0</text>
<text x="39.500" y="920" class="rl">0</text>
</svg>
<svg class="abs" style="left:54px;top:108px" width="254" height="254" viewBox="54 108 254 254">
<defs><clipPath id="sv"><rect x="56.500" y="126" width="249" height="233"/></clipPath>
<radialGradient id="b1" cx="150" cy="334" r="46" gradientUnits="userSpaceOnUse"><stop offset="0" stop-color="#ff4242"/><stop offset="0.5" stop-color="#ff3030" stop-opacity=".7"/><stop offset="1" stop-color="#f01818" stop-opacity="0"/></radialGradient>
<radialGradient id="b2" cx="234" cy="328" r="46" gradientUnits="userSpaceOnUse"><stop offset="0" stop-color="#ff4646"/><stop offset="0.5" stop-color="#ff3030" stop-opacity=".7"/><stop offset="1" stop-color="#f01818" stop-opacity="0"/></radialGradient>
<linearGradient id="bt" x1="181" y1="276" x2="186" y2="332" gradientUnits="userSpaceOnUse"><stop offset="0" stop-color="#3e0c0c"/><stop offset="0.3" stop-color="#4a0f0f" stop-opacity=".96"/><stop offset="0.55" stop-color="#6a1010" stop-opacity=".62"/><stop offset="0.8" stop-color="#801010" stop-opacity=".2"/><stop offset="1" stop-color="#801010" stop-opacity="0"/></linearGradient>
<radialGradient id="bm" cx="190" cy="300" r="34" gradientUnits="userSpaceOnUse" gradientTransform="translate(190 300) scale(.55 1) translate(-190 -300)"><stop offset="0" stop-color="#400a0a" stop-opacity=".85"/><stop offset="0.6" stop-color="#400a0a" stop-opacity=".5"/><stop offset="1" stop-color="#400a0a" stop-opacity="0"/></radialGradient>
</defs>
<path d="M54 360V111Q54 108 57 108H307V360Z" fill="#5e5e5e"/>
<rect x="56.500" y="126" width="249" height="233" fill="#cfcfcf"/>
<g clip-path="url(#sv)">
<path d="M57 132H306M57 187.600H306M57 299H306M57 354.700H306M69.600 126V360M125.200 126V360M236.500 126V360M292.200 126V360" stroke="#3a3a3a" stroke-width="1.1" fill="none"/>
<path d="M181 126V360" stroke="#1a1acc" stroke-width="1.600"/>
<path d="M57 243.300H306" stroke="#d42020" stroke-width="1.300"/>
<clipPath id="bcl"><path d="M88 320C88 297 107 279.500 136 279.500C150 279.500 166 281.500 181 281C196 280.500 212 277 228 277C255 277 274 296 274 320C274 345 255 362 228 362H136C107 362 88 345 88 320Z"/></clipPath>
<path d="M88 320C88 297 107 279.500 136 279.500C150 279.500 166 281.500 181 281C196 280.500 212 277 228 277C255 277 274 296 274 320C274 345 255 362 228 362H136C107 362 88 345 88 320Z" fill="#ee1818"/>
<g clip-path="url(#bcl)">
<rect x="80" y="270" width="200" height="95" fill="url(#b1)"/>
<rect x="80" y="270" width="200" height="95" fill="url(#b2)"/>
<rect x="80" y="270" width="200" height="95" fill="url(#bt)"/>
<rect x="80" y="270" width="200" height="95" fill="url(#bm)"/>
<path d="M182.500 284C180 305 181 335 186 362" stroke="#3a0606" stroke-width="3" fill="none" opacity=".5"/>
</g>
<path d="M152 281C164 285 172 292 175 299" stroke="#8a8a8a" stroke-width="1.100" fill="none" opacity=".9"/>
<path d="M150 358C162 354 171 348 175 340" stroke="#ffffff" stroke-width="1.400" fill="none" opacity=".95"/>
<path d="M92 319.500H270" stroke="#d08080" stroke-width=".7" opacity=".55" stroke-dasharray="6 2"/>
<rect x="120" y="317" width="7" height="5" fill="#4a0808" opacity=".6"/><rect x="203" y="317" width="16" height="5" fill="#4a0808" opacity=".65"/><rect x="183" y="317" width="8" height="5" fill="#4a0808" opacity=".35"/>
<text x="157.200" y="273.500" font-family="Liberation Mono" font-size="10" fill="#585858" textLength="47">33.53 px</text>
<text transform="translate(84.500 343) rotate(-90)" font-family="Liberation Mono" font-size="10" fill="#585858" textLength="47">15.36 px</text>
<text transform="translate(277.500 296) rotate(90)" font-family="Liberation Mono" font-size="10" fill="#585858" textLength="47">15.36 px</text>
</g>
<rect x="56.500" y="126" width="249" height="233" fill="none" stroke="#e4e4e4" stroke-width="0.6"/>
<path d="M62.500 113V123" stroke="#e0e0e0" stroke-width="1.600" stroke-dasharray="1 1"/>
<path d="M69 114.500L75 120.500M75 114.500L69 120.500" stroke="#f0f0f0" stroke-width="1.500"/>
<rect x="87.500" y="111.500" width="10" height="10" fill="none" stroke="#f0f0f0" stroke-width="1.200"/><path d="M90.800 113H94.200V116H96.300L92.500 120L88.700 116H90.800Z" fill="#f0f0f0"/>
<path d="M102.500 116.500H108.500L105.500 119.500Z" fill="#8a8a8a"/>
<g fill="none" stroke="#f0f0f0" stroke-width="1.200"><rect x="292.500" y="112.500" width="10" height="10"/><path d="M292.500 112.500L298 118" /><path d="M298.500 118.500H302.500V122.500H298.500Z" fill="#5e5e5e"/></g>
<path d="M298 357L303 352M301 357L303 355" stroke="#e8e8e8" stroke-width="1" stroke-dasharray="1 1"/>
</svg>
<div id="menubar"></div><div id="optbar"></div><div id="tabbar"><div id="tab"></div></div>
<div class="abs" style="left:7px;top:5px;width:17px;height:16px;background:#0a1a2a;border:1.5px solid #2fa3d9;border-radius:1.5px"></div>
<span class="t" id="t0" style="left:10.3px;top:8.4px;font-size:9.5px;color:#35aee6;letter-spacing:-1.094px;">Ps</span>
<span class="t" id="t1" style="left:43px;top:7.4px;font-size:12.2px;color:#e2e2e2;letter-spacing:-0.656px;">Файл</span>
<span class="t" id="t2" style="left:85px;top:7.4px;font-size:12.2px;color:#e2e2e2;letter-spacing:-0.219px;">Редактирование</span>
<span class="t" id="t3" style="left:190px;top:7.4px;font-size:12.2px;color:#e2e2e2;letter-spacing:-0.078px;">Изображение</span>
<span class="t" id="t4" style="left:280px;top:7.4px;font-size:12.2px;color:#e2e2e2;letter-spacing:-0.880px;">Слои</span>
<span class="t" id="t5" style="left:321px;top:7.4px;font-size:12.2px;color:#e2e2e2;letter-spacing:-0.422px;">Текст</span>
<span class="t" id="t6" style="left:365px;top:7.4px;font-size:12.2px;color:#e2e2e2;letter-spacing:-0.324px;">Выделение</span>
<span class="t" id="t7" style="left:441px;top:7.4px;font-size:12.2px;color:#e2e2e2;letter-spacing:-0.191px;">Фильтр</span>
<span class="t" id="t8" style="left:495px;top:7.4px;font-size:12.2px;color:#e2e2e2;letter-spacing:0.406px;">3D</span>
<span class="t" id="t9" style="left:525px;top:7.4px;font-size:12.2px;color:#e2e2e2;letter-spacing:0.047px;">Просмотр</span>
<span class="t" id="t10" style="left:595px;top:7.4px;font-size:12.2px;color:#e2e2e2;letter-spacing:0.557px;">Окно</span>
<span class="t" id="t11" style="left:638px;top:7.4px;font-size:12.2px;color:#e2e2e2;letter-spacing:-0.302px;">Справка</span>
<div class="abs" style="left:1820px;top:13px;width:9px;height:2px;background:#9a9a9a;"></div>
<svg class="abs" style="left:1846px;top:4px" width="14" height="13" viewBox="0 0 14 13"><path d="M3.5 3.5V1.5H11.5V7.5H9.5" fill="none" stroke="#9a9a9a" stroke-width="1.3"/><rect x="1.5" y="3.8" width="8" height="6" fill="none" stroke="#9a9a9a" stroke-width="1.5"/></svg>
<svg class="abs" style="left:1880px;top:4px" width="12" height="14" viewBox="0 0 12 14"><path d="M2 2L12 12M12 2L2 12" stroke="#9a9a9a" stroke-width="1.6"/></svg>
<svg class="abs" style="left:2px;top:36px" width="4" height="20" viewBox="0 0 4 20"><path d="M0.5 0V20M2.5 0V20" stroke="#262626" stroke-width="1" stroke-dasharray="1 1.5"/></svg>
<svg class="abs" style="left:16px;top:37px" width="18" height="16" viewBox="0 0 18 16"><path d="M9 1L0.8 8.4H3.3V15H7.3V10.3H10.7V15H14.7V8.4H17.2Z" fill="#e4e4e4"/></svg>
<div class="sep" style="left:51px"></div>
<div class="sep" style="left:99px"></div>
<div class="sep" style="left:259px"></div>
<div class="sep" style="left:391px"></div>
<div class="sep" style="left:520px"></div>
<div class="sep" style="left:649px"></div>
<div class="sep" style="left:692px"></div>
<svg class="abs" style="left:58px;top:37px" width="16" height="16" viewBox="0 0 16 16"><path d="M8 0.5L10.6 3.6H8.8V7.2H12.4V5.4L15.5 8L12.4 10.6V8.8H8.8V12.4H10.6L8 15.5L5.4 12.4H7.2V8.8H3.6V10.6L0.5 8L3.6 5.4V7.2H7.2V3.6H5.4Z" fill="#e4e4e4"/></svg>
<svg class="abs" style="left:83px;top:43px" width="8" height="6" viewBox="0 0 8 6"><path d="M1 1L4 4.2L7 1" fill="none" stroke="#9c9c9c" stroke-width="1.2"/></svg>
<div class="abs" style="left:107px;top:40px;width:10px;height:10px;background:transparent;border:1px solid #7d7d7d;border-radius:2px"></div>
<span class="t" id="t12" style="left:123px;top:40.2px;font-size:10.5px;color:#dadada;letter-spacing:-0.292px;">Автовыбор:</span>
<div class="abs" style="left:190px;top:36px;width:61px;height:21px;background:#222222;border:1px solid #464646;border-radius:3px"></div>
<span class="t" id="t13" style="left:198px;top:41px;font-size:10px;color:#e4e4e4;letter-spacing:-0.443px;">Слой</span>
<svg class="abs" style="left:238px;top:43px" width="9" height="7" viewBox="0 0 9 7"><path d="M1 1.2L4.5 5L8 1.2" fill="none" stroke="#a8a8a8" stroke-width="1.3"/></svg>
<div class="abs" style="left:267px;top:40px;width:10px;height:10px;background:#2b2b2b;border:1px solid #3f3f3f;border-radius:2px"></div>
<span class="t" id="t14" style="left:283px;top:40.2px;font-size:10.5px;color:#6a6a6a;letter-spacing:-0.245px;">Показать упр. элем.</span>
<svg class="abs" style="left:404px;top:37px" width="16" height="16" viewBox="0 0 16 16"><path d="M1 1V15" stroke="#7e7e7e" stroke-width="1.4"/><rect x="3" y="3.5" width="6" height="3.5" fill="#7e7e7e"/><rect x="3" y="9" width="11" height="3.5" fill="#7e7e7e"/></svg>
<svg class="abs" style="left:430px;top:37px" width="16" height="16" viewBox="0 0 16 16"><path d="M8 1V15" stroke="#7e7e7e" stroke-width="1.4"/><rect x="4.5" y="3.5" width="7" height="3.5" fill="#7e7e7e"/><rect x="2.5" y="9" width="11" height="3.5" fill="#7e7e7e"/></svg>
<svg class="abs" style="left:456px;top:37px" width="16" height="16" viewBox="0 0 16 16"><path d="M15 1V15" stroke="#7e7e7e" stroke-width="1.4"/><rect x="7" y="3.5" width="6" height="3.5" fill="#7e7e7e"/><rect x="2" y="9" width="11" height="3.5" fill="#7e7e7e"/></svg>
<svg class="abs" style="left:490px;top:37px" width="17" height="16" viewBox="0 0 17 16"><path d="M1 2.5H16M1 13.5H16" stroke="#7e7e7e" stroke-width="1.3"/><rect x="4" y="6" width="9" height="4" fill="#7e7e7e"/></svg>
<svg class="abs" style="left:533px;top:37px" width="16" height="16" viewBox="0 0 16 16"><path d="M1 2H15" stroke="#7e7e7e" stroke-width="1.4"/><rect x="3.5" y="4" width="3.5" height="11" fill="#7e7e7e"/><rect x="9" y="4" width="3.5" height="6" fill="#7e7e7e"/></svg>
<svg class="abs" style="left:559px;top:37px" width="16" height="16" viewBox="0 0 16 16"><path d="M1 8H15" stroke="#7e7e7e" stroke-width="1.4"/><rect x="3.5" y="2.5" width="3.5" height="11" fill="#7e7e7e"/><rect x="9" y="4.5" width="3.5" height="7" fill="#7e7e7e"/></svg>
<svg class="abs" style="left:586px;top:37px" width="16" height="16" viewBox="0 0 16 16"><path d="M1 15H15" stroke="#7e7e7e" stroke-width="1.4"/><rect x="3.5" y="2" width="3.5" height="11" fill="#7e7e7e"/><rect x="9" y="7" width="3.5" height="6" fill="#7e7e7e"/></svg>
<svg class="abs" style="left:620px;top:37px" width="16" height="16" viewBox="0 0 16 16"><path d="M3 1V15M13 1V15" stroke="#7e7e7e" stroke-width="1.3"/><rect x="6" y="3" width="4" height="10" fill="#7e7e7e"/></svg>
<svg class="abs" style="left:661px;top:43px" width="20" height="6" viewBox="0 0 20 6"><circle cx="3" cy="3" r="2" fill="#dcdcdc"/><circle cx="10" cy="3" r="2" fill="#dcdcdc"/><circle cx="17" cy="3" r="2" fill="#dcdcdc"/></svg>
<span class="t" id="t15" style="left:702px;top:40.2px;font-size:10.5px;color:#a6a6a6;letter-spacing:-0.189px;">3D-режим:</span>
<div class="abs" style="left:765px;top:33px;width:25px;height:25px;background:#1c1c1c;border-radius:3px"></div>
<svg class="abs" style="left:767px;top:35px" width="21" height="21" viewBox="0 0 21 21"><g fill="none" stroke="#e2e2e2" stroke-width="1.3"><ellipse cx="9" cy="12" rx="7.2" ry="4.3"/><circle cx="12.5" cy="8" r="4.6" fill="#1c1c1c"/><path d="M2.5 14.5l-1.2 3.2 3.6-.4" fill="#e2e2e2" stroke-width="1"/></g></svg>
<svg class="abs" style="left:793px;top:35px" width="21" height="21" viewBox="0 0 21 21"><g fill="none" stroke="#bcbcbc" stroke-width="1.3"><path d="M4.8 4.2A8 8 0 1 0 10.5 2.5"/><circle cx="10.5" cy="10.5" r="3.8"/><path d="M2.6 2.2l2.6 2.6-3.4.8z" fill="#bcbcbc" stroke-width="0.8"/></g></svg>
<svg class="abs" style="left:819px;top:35px" width="21" height="21" viewBox="0 0 21 21"><g fill="none" stroke="#d6d6d6" stroke-width="1.2" stroke-linejoin="round"><path d="M10.5 1.5L13.3 4.8H11.7V9.3H16.2V7.7L19.5 10.5L16.2 13.3V11.7H11.7V16.2H13.3L10.5 19.5L7.7 16.2H9.3V11.7H4.8V13.3L1.5 10.5L4.8 7.7V9.3H9.3V4.8H7.7Z"/></g></svg>
<svg class="abs" style="left:845px;top:35px" width="21" height="21" viewBox="0 0 21 21"><g fill="#d6d6d6"><path d="M10.5 1L13.4 4.6H7.6Z"/><path d="M10.5 20L13.4 16.4H7.6Z"/><path d="M1 10.5L4.6 7.6V13.4Z"/><path d="M20 10.5L16.4 7.6V13.4Z"/><circle cx="10.5" cy="10.5" r="3" fill="none" stroke="#d6d6d6" stroke-width="1.5"/><path d="M10.5 4.6V7.5M10.5 13.5V16.4M4.6 10.5H7.5M13.5 10.5H16.4" stroke="#d6d6d6" stroke-width="1.6"/></g></svg>
<svg class="abs" style="left:871px;top:35px" width="22" height="21" viewBox="0 0 22 21"><g fill="none" stroke="#d6d6d6" stroke-width="1.2" stroke-linejoin="round"><path d="M8 7.5L14.5 4L21 7.5V15L14.5 18.5L8 15Z"/><path d="M8 7.5L14.5 11L21 7.5M14.5 11V18.5"/><path d="M2 11.5L6.5 9.2L11 11.5V16.3L6.5 18.6L2 16.3Z" fill="#323232"/><path d="M2 11.5L6.5 13.8L11 11.5M6.5 13.8V18.6"/><path d="M1.5 2L6 6.5M1.5 2V5M1.5 2H4.5" stroke-width="1.3"/></g></svg>
<svg class="abs" style="left:1815px;top:38px" width="17" height="17" viewBox="0 0 17 17"><circle cx="7" cy="7" r="5.2" fill="none" stroke="#d2d2d2" stroke-width="1.6"/><path d="M10.8 10.8L15.3 15.3" stroke="#d2d2d2" stroke-width="1.9"/></svg>
<svg class="abs" style="left:1845px;top:39px" width="17" height="14" viewBox="0 0 17 14"><rect x="1" y="1" width="15" height="12" fill="none" stroke="#d2d2d2" stroke-width="1.4"/><rect x="3" y="4" width="3.5" height="7" fill="#d2d2d2"/><path d="M1 3H16" stroke="#d2d2d2" stroke-width="1.2"/></svg>
<svg class="abs" style="left:1871px;top:43px" width="8" height="6" viewBox="0 0 8 6"><path d="M1 1L4 4.2L7 1" fill="none" stroke="#8c8c8c" stroke-width="1.2"/></svg>
<div class="abs" style="left:1890px;top:40px;width:2px;height:12px;background:#d2d2d2;"></div>
<span class="t" id="t16" style="left:48px;top:72.2px;font-size:10.5px;color:#e8e8e8;font-weight:bold;letter-spacing:0.299px;">Без имени-1 @ 100% (Love, RGB/8#) *</span>
<svg class="abs" style="left:259px;top:73px" width="8" height="8" viewBox="0 0 8 8"><path d="M1 1L7 7M7 1L1 7" stroke="#8e8e8e" stroke-width="1.7"/></svg>
<div id="tools"></div><div id="toolgap"></div>
<div class="abs" style="left:0px;top:63px;width:36px;height:13px;background:#282828;"></div>
<svg class="abs" style="left:3px;top:66px" width="9" height="6" viewBox="0 0 9 6"><path d="M0.500 0.500L3.500 3L0.500 5.500ZM4.500 0.500L7.500 3L4.500 5.500Z" fill="#a0a0a0"/></svg>
<svg class="abs" style="left:7px;top:78px" width="20" height="4" viewBox="0 0 20 4"><path d="M0 2H20" stroke="#252525" stroke-width="4" stroke-dasharray="1 1"/></svg>
<div class="abs" style="left:1px;top:92px;width:33px;height:24px;background:#1e1e1e;border-radius:3px"></div>
<svg class="abs" style="left:8px;top:95px" width="18" height="18" viewBox="0 0 18 18"><g transform="scale(1.125)"><path d="M8 0.5L10.6 3.6H8.8V7.2H12.4V5.4L15.5 8L12.4 10.6V8.8H8.8V12.4H10.6L8 15.5L5.4 12.4H7.2V8.8H3.6V10.6L0.5 8L3.6 5.4V7.2H7.2V3.6H5.4Z" fill="#e4e4e4"/></g></svg>
<svg class="abs" style="left:7px;top:120px" width="20" height="20" viewBox="0 0 22 22"><ellipse cx="11" cy="10.5" rx="8" ry="7" fill="none" stroke="#d6d6d6" stroke-width="1.4" stroke-dasharray="3 2"/></svg>
<svg class="abs" style="left:26px;top:136px" width="4" height="4" viewBox="0 0 4 4"><path d="M4 0V4H0Z" fill="#b0b0b0"/></svg>
<svg class="abs" style="left:7px;top:146px" width="20" height="20" viewBox="0 0 22 22"><g fill="none" stroke="#d6d6d6" stroke-width="1.4"><ellipse cx="12" cy="8.5" rx="8" ry="5.3" transform="rotate(-12 12 8.5)"/><path d="M6.2 12.2c-1.8.6-2 2.6-.6 3.2 1.400.6 2.500-.8 1.500-1.900-.600-.700-1.700-.300-1.700.600 0 1.700 1.900 2.600 2.600 4.900"/></g></svg>
<svg class="abs" style="left:26px;top:162px" width="4" height="4" viewBox="0 0 4 4"><path d="M4 0V4H0Z" fill="#b0b0b0"/></svg>
<svg class="abs" style="left:7px;top:172px" width="20" height="20" viewBox="0 0 22 22"><g fill="#d6d6d6"><path d="M3 17.2L12.6 7.6L14.8 9.8L5.2 19.4Z"/><path d="M15.500 1.500l.7 2.100 2.100.7-2.100.7-.7 2.100-.7-2.100-2.100-.7 2.100-.7z"/><path d="M18.500 9l.5 1.400 1.400.5-1.400.5-.5 1.400-.5-1.400-1.400-.5 1.400-.5z"/><path d="M9.500 2.500l.4 1.200 1.200.4-1.200.4-.4 1.200-.4-1.200-1.200-.4 1.200-.4z"/></g></svg>
<svg class="abs" style="left:26px;top:188px" width="4" height="4" viewBox="0 0 4 4"><path d="M4 0V4H0Z" fill="#b0b0b0"/></svg>
<svg class="abs" style="left:7px;top:198px" width="20" height="20" viewBox="0 0 22 22"><g fill="#d6d6d6"><path d="M17.200 2.300c1.300-1.300 3.500.900 2.200 2.200l-2.600 2.600.900.900-1.500 1.500-.800-.800-6.600 6.600c-.800.800-2 .2-2.600 1.300l-.900-.900c1.100-.600.500-1.800 1.300-2.600l6.600-6.600-.800-.800 1.500-1.500.900.900z"/><path d="M1 2h2.200v2.200H1zM3.200 4.200h2.200v2.200H3.200zM5.400 2h2.200v2.200H5.400zM1 6.400h2.200v2.200H1zM5.400 6.400h2.200v2.200H5.400z" opacity=".85"/></g></svg>
<svg class="abs" style="left:26px;top:214px" width="4" height="4" viewBox="0 0 4 4"><path d="M4 0V4H0Z" fill="#b0b0b0"/></svg>
<svg class="abs" style="left:7px;top:224px" width="20" height="20" viewBox="0 0 22 22"><g fill="#d6d6d6"><path d="M19.500 1.800c.8.6.6 1.600 0 2.400L11.800 14.200l-2.800-2.200L17.400 2.200c.6-.7 1.400-.9 2.100-.4z"/><path d="M8.200 13l2.700 2.100c-.3 2.600-2.600 4.500-7.400 4.300 1.900-1.300 1.500-2.700 2.100-4.300.5-1.300 1.500-2 2.600-2.100z"/></g></svg>
<svg class="abs" style="left:26px;top:240px" width="4" height="4" viewBox="0 0 4 4"><path d="M4 0V4H0Z" fill="#b0b0b0"/></svg>
<svg class="abs" style="left:7px;top:250px" width="20" height="20" viewBox="0 0 22 22"><g fill="#d6d6d6"><path d="M8.600 2.200c1.300-1.200 3.500-1.200 4.800 0 1.100 1.100.9 2.600.3 3.900-.5 1.100-.6 2 0 3.300H18c.8 0 1.300.5 1.300 1.300v2.500H2.700v-2.500c0-.8.5-1.300 1.300-1.300h4.300c.6-1.300.5-2.200 0-3.300-.6-1.300-.8-2.800.3-3.900z"/><rect x="2.700" y="15.300" width="16.600" height="2.600"/></g></svg>
<svg class="abs" style="left:26px;top:266px" width="4" height="4" viewBox="0 0 4 4"><path d="M4 0V4H0Z" fill="#b0b0b0"/></svg>
<svg class="abs" style="left:7px;top:276px" width="20" height="20" viewBox="0 0 22 22"><g fill="none" stroke="#d6d6d6" stroke-width="1.5" stroke-linejoin="round"><path d="M2.200 13.500L11.700 4l6.600 5.200-7.300 7.600H6z"/><path d="M7.300 8.400l6.600 5.200L11 16.800H6l-3.800-3.300z" fill="#323232"/><path d="M11.700 4l6.600 5.200-4.400 4.400-6.600-5.200z" fill="#d6d6d6"/><path d="M11 17.500h8.500" /></g></svg>
<svg class="abs" style="left:26px;top:292px" width="4" height="4" viewBox="0 0 4 4"><path d="M4 0V4H0Z" fill="#b0b0b0"/></svg>
<svg class="abs" style="left:7px;top:302px" width="20" height="20" viewBox="0 0 22 22"><g fill="#d6d6d6"><path d="M1 1.500h2v2H1zM3 3.500h2v2H3zM5 1.500h2v2H5zM1 5.500h2v2H1zM5 5.500h2v2H5z" opacity=".85"/><path d="M12.200 5.600l7 5-5.800 8.200-7.600-3.800z" fill="none" stroke="#d6d6d6" stroke-width="1.5" stroke-linejoin="round"/><path d="M8.500 12.500l8-1.200-3.600 6.500-5.600-2.900z"/><path d="M12.200 10.200C9.800 5 12.500 2.500 14.800 6.600" fill="none" stroke="#d6d6d6" stroke-width="1.300"/><path d="M20.300 13.500c1 1.700 1.400 3 .3 3.600-1.100.6-2-.6-1.500-1.700z"/></g></svg>
<svg class="abs" style="left:26px;top:318px" width="4" height="4" viewBox="0 0 4 4"><path d="M4 0V4H0Z" fill="#b0b0b0"/></svg>
<svg class="abs" style="left:7px;top:328px" width="20" height="20" viewBox="0 0 22 22"><path d="M3.500 3h15v4.200h-1.300c-.2-1.600-.8-2.200-2.400-2.200h-2.100v11.400c0 1.100.4 1.400 1.900 1.500V19H7.400v-1.100c1.500-.1 1.900-.4 1.900-1.500V5H7.200c-1.600 0-2.200.6-2.400 2.200H3.500z" fill="#d6d6d6"/></svg>
<svg class="abs" style="left:26px;top:344px" width="4" height="4" viewBox="0 0 4 4"><path d="M4 0V4H0Z" fill="#b0b0b0"/></svg>
<svg class="abs" style="left:7px;top:354px" width="20" height="20" viewBox="0 0 22 22"><g fill="none" stroke="#d6d6d6" stroke-width="1.400" stroke-linejoin="round"><path d="M13.200 2.200l6 6-2.300 1.300c-.6 3.400-2.600 6-6.400 7.100l-6.300 1.900 1.900-6.300c1.100-3.800 3.700-5.800 7.100-6.400z"/><path d="M4.500 18.200l5.600-5.600"/><circle cx="11" cy="11.200" r="1.400" fill="#d6d6d6"/><path d="M3 19.800h4" /></g></svg>
<svg class="abs" style="left:26px;top:370px" width="4" height="4" viewBox="0 0 4 4"><path d="M4 0V4H0Z" fill="#b0b0b0"/></svg>
<svg class="abs" style="left:7px;top:380px" width="20" height="20" viewBox="0 0 22 22"><path d="M6.200 2.500v15l3.700-3.600 2.600 5.600 2.400-1.100-2.600-5.500 5-.3z" fill="#d6d6d6"/></svg>
<svg class="abs" style="left:26px;top:396px" width="4" height="4" viewBox="0 0 4 4"><path d="M4 0V4H0Z" fill="#b0b0b0"/></svg>
<svg class="abs" style="left:7px;top:406px" width="20" height="20" viewBox="0 0 22 22"><path d="M8.500 3.200c1.800-1.800 4.300-.600 4 1.700-.2 1.500.900 2.200 2.400 1.500 2.500-1.200 5.200.900 3.700 3.300-.9 1.400-2.600 1.300-2.200 3 .6 2.500-1.500 4.500-4.300 3.300-1.500-.600-2.200.2-3.300 1.300-2.200 2.100-6 1.100-5.400-1.700.300-1.500 2.200-1.700 2.600-3.200.4-1.500-1.900-1.900-1.700-3.900.2-1.900 2.600-2.400 3.500-3.700.3-.5.300-1.100.7-1.600z" fill="#d6d6d6" opacity=".82"/></svg>
<svg class="abs" style="left:26px;top:422px" width="4" height="4" viewBox="0 0 4 4"><path d="M4 0V4H0Z" fill="#b0b0b0"/></svg>
<svg class="abs" style="left:7px;top:432px" width="20" height="20" viewBox="0 0 22 22"><path d="M7.400 10.800V4.700c0-1.500 2.100-1.500 2.100 0V3.200c0-1.600 2.200-1.600 2.200 0v1.100c0-1.500 2.200-1.500 2.200 0v1.700c0-1.400 2.100-1.400 2.100 0v7.600c0 3.700-1.600 5.900-4.900 5.900-2.800 0-3.900-1-5.200-3.200L3.300 11.700c-.8-1.400 1-2.400 1.900-1.200z" fill="#d6d6d6"/></svg>
<svg class="abs" style="left:26px;top:448px" width="4" height="4" viewBox="0 0 4 4"><path d="M4 0V4H0Z" fill="#b0b0b0"/></svg>
<svg class="abs" style="left:7px;top:458px" width="20" height="20" viewBox="0 0 22 22"><g fill="none" stroke="#d6d6d6"><circle cx="9" cy="8.800" r="5.800" stroke-width="1.700"/><path d="M13.300 13.200l5.700 5.800" stroke-width="2.400"/></g></svg>
<svg class="abs" style="left:26px;top:474px" width="4" height="4" viewBox="0 0 4 4"><path d="M4 0V4H0Z" fill="#b0b0b0"/></svg>
<svg class="abs" style="left:8px;top:491px" width="20" height="6" viewBox="0 0 20 6"><circle cx="3" cy="3" r="1.7" fill="#d6d6d6"/><circle cx="10" cy="3" r="1.7" fill="#d6d6d6"/><circle cx="17" cy="3" r="1.7" fill="#d6d6d6"/></svg>
<svg class="abs" style="left:26px;top:500px" width="4" height="4" viewBox="0 0 4 4"><path d="M4 0V4H0Z" fill="#b0b0b0"/></svg>
<svg class="abs" style="left:2px;top:512px" width="12" height="12" viewBox="0 0 12 12"><rect x="4.5" y="4.5" width="6.5" height="6.5" fill="#fff" stroke="#d0d0d0" stroke-width="1"/><rect x="0.8" y="0.8" width="6.5" height="6.5" fill="#000" stroke="#d0d0d0" stroke-width="1"/></svg>
<svg class="abs" style="left:18px;top:511px" width="13" height="13" viewBox="0 0 13 13"><path d="M3.5 1L0.8 4H2.7V4H6.2V4H3.5ZM3.5 1V4" fill="#d6d6d6"/><path d="M1 4L3.7 1L6.4 4H4.5V8H9V6.1L12 8.8L9 11.5V9.7H2.9V4Z" fill="#d6d6d6"/></svg>
<div class="abs" style="left:11px;top:539px;width:20px;height:20px;background:#ffffff;border:1px solid #cfcfcf;outline:1px solid #323232"></div>
<div class="abs" style="left:1px;top:529px;width:20px;height:20px;background:#ee0c0c;border:1.5px solid #e9e9e9;outline:1px solid #323232"></div>
<svg class="abs" style="left:8px;top:568px" width="18" height="14" viewBox="0 0 18 14"><rect x="0.8" y="0.8" width="16.4" height="12.4" fill="none" stroke="#d0d0d0" stroke-width="1.4"/><circle cx="9" cy="7" r="3.4" fill="none" stroke="#d0d0d0" stroke-width="1.1" stroke-dasharray="1.2 1.2"/></svg>
<svg class="abs" style="left:8px;top:595px" width="18" height="14" viewBox="0 0 18 14"><rect x="5" y="0.8" width="12" height="8" fill="none" stroke="#d0d0d0" stroke-width="1.4"/><rect x="0.8" y="4.5" width="11" height="8" fill="#323232" stroke="#d0d0d0" stroke-width="1.4"/></svg>
<svg class="abs" style="left:26px;top:608px" width="4" height="4" viewBox="0 0 4 4"><path d="M4 0V4H0Z" fill="#b0b0b0"/></svg>
<div id="rcol"></div>
<div class="abs" style="left:1655px;top:63px;width:237px;height:12px;background:#282828;"></div>
<svg class="abs" style="left:1679px;top:66px" width="9" height="6" viewBox="0 0 9 6"><path d="M3.500 0.500L0.500 3L3.500 5.500ZM7.500 0.500L4.500 3L7.500 5.500Z" fill="#a0a0a0"/></svg>
<div class="abs" style="left:1655px;top:75px;width:38px;height:845px;background:#323232;border-left:1px solid #232323;border-right:1px solid #232323"></div>
<div class="abs" style="left:1655px;top:115px;width:38px;height:1.5px;background:#232323;"></div>
<div class="abs" style="left:1655px;top:183px;width:38px;height:1.5px;background:#232323;"></div>
<div class="abs" style="left:1655px;top:225px;width:38px;height:1.5px;background:#232323;"></div>
<div class="abs" style="left:1655px;top:290px;width:38px;height:1.5px;background:#232323;"></div>
<div class="abs" style="left:1655px;top:334px;width:38px;height:1.5px;background:#232323;"></div>
<div class="abs" style="left:1655px;top:376px;width:38px;height:1.5px;background:#232323;"></div>
<svg class="abs" style="left:1664px;top:78px" width="20" height="4" viewBox="0 0 20 4"><path d="M0 2H20" stroke="#252525" stroke-width="4" stroke-dasharray="1 1"/></svg>
<svg class="abs" style="left:1664px;top:119px" width="20" height="4" viewBox="0 0 20 4"><path d="M0 2H20" stroke="#252525" stroke-width="4" stroke-dasharray="1 1"/></svg>
<svg class="abs" style="left:1664px;top:187px" width="20" height="4" viewBox="0 0 20 4"><path d="M0 2H20" stroke="#252525" stroke-width="4" stroke-dasharray="1 1"/></svg>
<svg class="abs" style="left:1664px;top:229px" width="20" height="4" viewBox="0 0 20 4"><path d="M0 2H20" stroke="#252525" stroke-width="4" stroke-dasharray="1 1"/></svg>
<svg class="abs" style="left:1664px;top:298px" width="20" height="4" viewBox="0 0 20 4"><path d="M0 2H20" stroke="#252525" stroke-width="4" stroke-dasharray="1 1"/></svg>
<svg class="abs" style="left:1664px;top:339px" width="20" height="4" viewBox="0 0 20 4"><path d="M0 2H20" stroke="#252525" stroke-width="4" stroke-dasharray="1 1"/></svg>
<svg class="abs" style="left:1664px;top:87px" width="22" height="22" viewBox="0 0 22 22"><g fill="none" stroke="#c6c6c6" stroke-width="1.300"><rect x="3" y="3" width="3.500" height="3.500"/><rect x="3" y="9" width="3.500" height="3.500"/><rect x="3" y="15" width="3.500" height="3.500" fill="#c6c6c6"/><path d="M12 17.500C18 14 17 6.500 11.500 5.500" stroke-width="1.600"/><path d="M14 3L10.500 5.500L13.800 8.500" fill="#c6c6c6" stroke="none"/></g></svg>
<svg class="abs" style="left:1664px;top:126px" width="22" height="22" viewBox="0 0 22 22"><g fill="#c6c6c6"><path d="M2 5H9M2 8H9M2 11H9" stroke="#c6c6c6" stroke-width="1.300" stroke-dasharray="1.500 1"/><path d="M20.500 3.500L11.500 12.500L13.500 14.500L21.500 4.500Z"/><path d="M10.800 13.500L12.800 15.200C12 17.500 9 18.500 6.500 18C8.500 17 8.500 14 10.800 13.500Z"/></g></svg>
<svg class="abs" style="left:1664px;top:155px" width="22" height="22" viewBox="0 0 22 22"><g fill="#c6c6c6"><path d="M2 6.500C2 4.500 5.500 4 7 5.500H18V7.500H7C5.500 9 2 8.500 2 6.500Z"/><path d="M4 14H15V16H4Z"/><path d="M15 12.500L19 11C20.500 13 20.500 17 19 19L15 17.500Z"/></g></svg>
<svg class="abs" style="left:1664px;top:196px" width="22" height="22" viewBox="0 0 22 22"><g fill="#c6c6c6"><path d="M2 4H7M2 7H7M2 10H7" stroke="#c6c6c6" stroke-width="1.300" stroke-dasharray="1.500 1"/><path d="M12 4C13.200 2.800 15.300 2.800 16.500 4C17.500 5 17.300 6.200 16.800 7.300C16.400 8.300 16.300 9 16.800 10H19.500C20.200 10 20.500 10.400 20.500 11V13.500H8V11C8 10.400 8.300 10 9 10H11.700C12.200 9 12.100 8.300 11.700 7.300C11.200 6.200 11 5 12 4Z"/><rect x="8" y="15" width="12.500" height="2.400"/></g></svg>
<svg class="abs" style="left:1664px;top:237px" width="22" height="22" viewBox="0 0 22 22"><g><text x="3" y="18" font-family="Liberation Sans" font-size="19" fill="#c6c6c6">A</text><path d="M18.500 3V20" stroke="#c6c6c6" stroke-width="1.300"/></g></svg>
<svg class="abs" style="left:1664px;top:266px" width="22" height="22" viewBox="0 0 22 22"><path d="M9.500 3H18V5H16.500V20H14.700V5H12.700V20H10.900V12C7 12 5 10.200 5 7.500C5 4.800 7 3 9.500 3Z" fill="#c6c6c6"/></svg>
<svg class="abs" style="left:1664px;top:307px" width="22" height="22" viewBox="0 0 22 22"><g fill="#c6c6c6"><path d="M4 19.500L12.500 10.500L14 12L5.800 21C4.800 21.800 3.200 20.500 4 19.500Z"/><path d="M2.500 5.500C3 3.500 5 2.500 7 3L5 5L6 7L8.500 7.500L10.300 5.800C10.800 7.800 9.800 9.500 8 10L18 19.500" fill="none" stroke="#c6c6c6" stroke-width="1.500"/><path d="M19 3.500L12.800 10.500" stroke="#c6c6c6" stroke-width="1.200"/><circle cx="18.500" cy="12.500" r="1.800" fill="none" stroke="#c6c6c6" stroke-width="1.200"/></g></svg>
<svg class="abs" style="left:1664px;top:349px" width="22" height="22" viewBox="0 0 22 22"><g fill="none" stroke="#c6c6c6" stroke-width="1.700"><path d="M6.500 16.500C2 16.500 1 11 5 9.500C5.500 4.500 13 3.500 15 8C19.500 7.500 21.500 12.500 19 15C18 16.200 16.500 16.500 15 16.500Z" fill="#8a8a8a"/><path d="M9 14.500C6 14.500 5.500 10.500 8.500 10L14 15.800M16 15C19 14 17.500 9.500 14.500 10.500L9.500 9.800" /></g></svg>
<div class="abs" style="left:1693.5px;top:75px;width:2.5px;height:845px;background:#242424;"></div>
<div class="abs" style="left:1696px;top:75px;width:196px;height:455px;background:#323232;"></div>
<div class="abs" style="left:1696px;top:75px;width:196px;height:27px;background:#282828;"></div>
<div class="abs" style="left:1696px;top:75px;width:65px;height:28px;background:#323232;"></div>
<span class="t" id="t17" style="left:1705px;top:84.1px;font-size:9.8px;color:#e4e4e4;font-weight:bold;letter-spacing:-0.225px;">Свойства</span>
<div class="abs" style="left:1707px;top:109px;width:23px;height:23px;background:#1e1e1e;border-radius:3px"></div>
<svg class="abs" style="left:1711px;top:113px" width="16" height="16" viewBox="0 0 16 16"><g stroke="#e6e6e6" stroke-width="1.200" fill="none"><circle cx="7" cy="7" r="2.700" fill="#e6e6e6"/><path d="M7 0.800V3M7 11V13.200M0.800 7H3M11 7H13.200M2.600 2.600L4.200 4.200M11.400 2.600L9.800 4.200M2.600 11.400L4.200 9.800"/><path d="M10.500 10.500L14.500 14.500M14.500 11.800V14.500H11.800" stroke-width="1.100"/></g></svg>
<svg class="abs" style="left:1735px;top:113px" width="15" height="16" viewBox="0 0 15 16"><g fill="none" stroke="#c8c8c8" stroke-width="1.200" stroke-linejoin="round"><path d="M7.500 3.500L13 6.200V11.800L7.500 14.500L2 11.800V6.200Z"/><path d="M2 6.200L7.500 9L13 6.200M7.500 9V14.500"/><path d="M7.500 0.500V5.500" stroke-width="1.300"/><path d="M5.800 2L7.500 0.300L9.200 2" /></g></svg>
<span class="t" id="t18" style="left:1759px;top:116.2px;font-size:10.5px;color:#c4c4c4;letter-spacing:-0.296px;">Бесконечный свет</span>
<div class="abs" style="left:1696px;top:136px;width:196px;height:1px;background:#262626;"></div>
<span class="t" id="t19" style="left:1703px;top:143.8px;font-size:10.5px;color:#bdbdbd;letter-spacing:-0.209px;">Набор:</span>
<div class="abs" style="left:1745px;top:140px;width:150px;height:19px;background:#2b2b2b;border:1px solid #454545;border-radius:3px"></div>
<span class="t" id="t20" style="left:1753px;top:144.2px;font-size:10.5px;color:#e0e0e0;letter-spacing:-0.391px;">Заказные</span>
<svg class="abs" style="left:1883px;top:146px" width="9" height="7" viewBox="0 0 9 7"><path d="M1 1.200L4.500 5L8 1.200" fill="none" stroke="#a8a8a8" stroke-width="1.300"/></svg>
<span class="t" id="t21" style="left:1715px;top:163.8px;font-size:10.5px;color:#bdbdbd;letter-spacing:0.193px;">Тип:</span>
<div class="abs" style="left:1745px;top:160px;width:150px;height:19px;background:#2b2b2b;border:1px solid #454545;border-radius:3px"></div>
<span class="t" id="t22" style="left:1753px;top:164.2px;font-size:10.5px;color:#e0e0e0;letter-spacing:-0.352px;">Бесконечный</span>
<svg class="abs" style="left:1883px;top:166px" width="9" height="7" viewBox="0 0 9 7"><path d="M1 1.200L4.500 5L8 1.200" fill="none" stroke="#a8a8a8" stroke-width="1.300"/></svg>
<span class="t" id="t23" style="left:1710px;top:183.2px;font-size:10.5px;color:#bdbdbd;letter-spacing:-0.363px;">Цвет:</span>
<div class="abs" style="left:1746px;top:180px;width:27px;height:17px;background:#ffffff;border:1px solid #555"></div>
<span class="t" id="t24" style="left:1777px;top:183.2px;font-size:10.5px;color:#bdbdbd;letter-spacing:-0.189px;">Интенсивность:</span>
<div class="abs" style="left:1855px;top:180px;width:40px;height:17px;background:#2b2b2b;border:1px solid #454545;border-radius:2px"></div>
<span class="t" id="t25" style="left:1860px;top:183.2px;font-size:10.5px;color:#e4e4e4;letter-spacing:-0.508px;">90%</span>
<div class="abs" style="left:1708px;top:204px;width:181px;height:2px;background:#4a4a4a;"></div>
<svg class="abs" style="left:1726px;top:204px" width="12" height="10" viewBox="0 0 12 10"><path d="M6 0.800C7.500 2.500 11 4.500 11 7.500V9.500H1V7.500C1 4.500 4.500 2.500 6 0.800Z" fill="#f0f0f0"/></svg>
<div class="abs" style="left:1696px;top:216px;width:196px;height:1px;background:#262626;"></div>
<div class="abs" style="left:1700px;top:224px;width:10px;height:10px;background:#e6e6e6;border-radius:2px"></div>
<svg class="abs" style="left:1700px;top:224px" width="10" height="10" viewBox="0 0 10 10"><path d="M2.200 5.200L4.200 7.300L7.900 2.700" fill="none" stroke="#2a2a2a" stroke-width="1.600"/></svg>
<span class="t" id="t26" style="left:1717px;top:224.2px;font-size:10.5px;color:#d8d8d8;letter-spacing:-0.646px;">Тень</span>
<span class="t" id="t27" style="left:1786px;top:224.2px;font-size:10.5px;color:#bdbdbd;letter-spacing:-0.342px;">Сглаживание:</span>
<div class="abs" style="left:1855px;top:221px;width:40px;height:17px;background:#262626;border:1.500px solid #2d6fc4;border-radius:2px"></div>
<div class="abs" style="left:1859.5px;top:224px;width:1px;height:11px;background:#e0e0e0;"></div>
<span class="t" id="t28" style="left:1860px;top:224.2px;font-size:10.5px;color:#e4e4e4;letter-spacing:-0.508px;">35%</span>
<div class="abs" style="left:1708px;top:245px;width:181px;height:2px;background:#4a4a4a;"></div>
<svg class="abs" style="left:1765px;top:245px" width="12" height="10" viewBox="0 0 12 10"><path d="M6 0.800C7.500 2.500 11 4.500 11 7.500V9.500H1V7.500C1 4.500 4.500 2.500 6 0.800Z" fill="#f0f0f0"/></svg>
<div class="abs" style="left:1696px;top:257px;width:196px;height:1px;background:#262626;"></div>
<svg class="abs" style="left:1751px;top:264px" width="24" height="18" viewBox="0 0 24 18"><g fill="#c8c8c8"><path d="M5 0.500C7.400 0.500 8.800 2.200 8.800 4.100C8.800 5.900 7.400 6.600 7.400 8H2.600C2.600 6.600 1.200 5.900 1.200 4.100C1.200 2.200 2.600 0.500 5 0.500Z"/><rect x="2.800" y="8.800" width="4.400" height="1.300"/><rect x="3.600" y="10.800" width="2.800" height="1.100"/><path d="M12 4.500H22.500V15.500H18.500" fill="none" stroke="#c8c8c8" stroke-width="1.400"/><path d="M10 9.500H14.500V7L19.500 11.300L14.500 15.600V13.100H10Z"/></g></svg>
<span class="t" id="t29" style="left:1787px;top:268.2px;font-size:10.5px;color:#c4c4c4;letter-spacing:-0.227px;">К просмотру</span>
<div class="abs" style="left:1696px;top:530px;width:196px;height:1px;background:#262626;"></div>
<svg class="abs" style="left:1846px;top:537px" width="13" height="12" viewBox="0 0 13 12"><rect x="0.700" y="0.700" width="11.600" height="10.600" fill="none" stroke="#d0d0d0" stroke-width="1.400"/><path d="M6.500 3L9.500 4.500V7.500L6.500 9L3.500 7.500V4.500Z" fill="#d0d0d0"/><path d="M3.500 4.500L6.500 6L9.500 4.500M6.500 6V9" stroke="#323232" stroke-width=".8" fill="none"/></svg>
<svg class="abs" style="left:1876px;top:536px" width="11" height="13" viewBox="0 0 11 13"><g fill="none" stroke="#666" stroke-width="1.200"><path d="M0.500 2.500H10.500M3.500 2.500V1H7.500V2.500M1.500 2.500V12H9.500V2.500M3.800 5V10M5.500 5V10M7.200 5V10"/></g></svg>
<div class="abs" style="left:1696px;top:555px;width:196px;height:3px;background:#262626;"></div>
<div class="abs" style="left:1696px;top:558px;width:196px;height:362px;background:#2d2d2d;"></div>
<div class="abs" style="left:1696px;top:558px;width:196px;height:28px;background:#282828;"></div>
<div class="abs" style="left:1696px;top:558px;width:35px;height:28px;background:#323232;"></div>
<div class="abs" style="left:1731px;top:558px;width:1px;height:28px;background:#2e2e2e;"></div>
<div class="abs" style="left:1774px;top:558px;width:1px;height:28px;background:#303030;"></div>
<div class="abs" style="left:1831px;top:558px;width:1px;height:28px;background:#303030;"></div>
<span class="t" id="t30" style="left:1705px;top:567.1px;font-size:9.8px;color:#e4e4e4;font-weight:bold;letter-spacing:-0.531px;">3D</span>
<span class="t" id="t31" style="left:1739px;top:567.1px;font-size:9.8px;color:#9e9e9e;font-weight:bold;letter-spacing:-0.396px;">Слои</span>
<span class="t" id="t32" style="left:1784px;top:567.1px;font-size:9.8px;color:#9e9e9e;font-weight:bold;letter-spacing:-0.103px;">Каналы</span>
<div class="abs" style="left:1696px;top:586px;width:196px;height:74px;background:#323232;"></div>
<div class="abs" style="left:1831px;top:594px;width:23px;height:23px;background:#1e1e1e;border-radius:3px"></div>
<svg class="abs" style="left:1763px;top:598px" width="14" height="14" viewBox="0 0 14 14"><g fill="none" stroke="#d6d6d6" stroke-width="1.300"><path d="M1 2.500H13M3 2.500V11.500H8M3 7H8"/><rect x="8.500" y="5.500" width="3" height="3" fill="#323232"/><rect x="8.500" y="10" width="3" height="3" fill="#323232"/><rect x="10" y="1" width="3" height="3" fill="#323232"/></g></svg>
<svg class="abs" style="left:1788px;top:598px" width="12" height="14" viewBox="0 0 12 14"><rect x="1.500" y="1" width="9" height="12" rx="1.500" fill="#d6d6d6"/><path d="M3 3.500H9" stroke="#323232" stroke-width="1.500"/><path d="M3 6.500H9M3 8.500H9M3 10.500H9" stroke="#323232" stroke-width="1" stroke-dasharray="1.200 1"/></svg>
<svg class="abs" style="left:1812px;top:598px" width="14" height="14" viewBox="0 0 14 14"><path d="M2 1.500C5 3.500 8 3.500 10 1.500V12.500C8 10.500 5 10.500 2 12.500Z" fill="#bdbdbd"/><path d="M2 3H10M2 5H10M2 7H10M2 9H10M2 11H10" stroke="#323232" stroke-width=".8" stroke-dasharray="1 1"/><path d="M10.500 4.500C13 5 13 9 10.500 9.500Z" fill="#d6d6d6"/></svg>
<svg class="abs" style="left:1836px;top:598px" width="13" height="15" viewBox="0 0 13 15"><path d="M6.500 1C9.300 1 11 3 11 5.300C11 7.500 9.200 8.300 9.200 10H3.800C3.800 8.300 2 7.500 2 5.300C2 3 3.700 1 6.500 1Z" fill="#f2f2f2"/><rect x="4" y="11" width="5" height="1.500" fill="#f2f2f2"/><rect x="5" y="13.200" width="3" height="1.200" fill="#f2f2f2"/></svg>
<div class="abs" style="left:1716px;top:621px;width:1px;height:39px;background:#2a2a2a;"></div>
<svg class="abs" style="left:1700px;top:625px" width="15" height="11" viewBox="0 0 15 11"><path d="M0.500 5.500C3 1.200 12 1.200 14.500 5.500C12 9.800 3 9.800 0.500 5.500Z" fill="#7a7a7a"/><circle cx="7.500" cy="5.300" r="2.700" fill="#2d2d2d"/><circle cx="7.500" cy="5.300" r="1.300" fill="#7a7a7a"/></svg>
<svg class="abs" style="left:1719px;top:623px" width="15" height="16" viewBox="0 0 15 16"><g stroke="#d0d0d0" stroke-width="1.100" fill="none"><circle cx="7.500" cy="4.500" r="1.900" fill="#d0d0d0"/><path d="M7.500 0.300V1.500M3.300 4.500H4.500M10.500 4.500H11.700M4.500 1.500L5.400 2.400M10.500 1.500L9.600 2.400"/><path d="M1 11L7.500 8L14 11L7.500 14.500Z" stroke-linejoin="round"/><path d="M7.500 9.500V12.500M5.800 11L7.500 12.800L9.200 11" /></g></svg>
<span class="t" id="t33" style="left:1741px;top:625.5px;font-size:10px;color:#d0d0d0;letter-spacing:-0.383px;">Среда</span>
<div class="abs" style="left:1696px;top:640px;width:196px;height:1px;background:#2a2a2a;"></div>
<svg class="abs" style="left:1700px;top:645px" width="15" height="11" viewBox="0 0 15 11"><path d="M0.500 5.500C3 1.200 12 1.200 14.500 5.500C12 9.800 3 9.800 0.500 5.500Z" fill="#ececec"/><circle cx="7.500" cy="5.300" r="2.700" fill="#2d2d2d"/><circle cx="7.500" cy="5.300" r="1.300" fill="#ececec"/></svg>
<svg class="abs" style="left:1736px;top:643px" width="15" height="15" viewBox="0 0 15 15"><g stroke="#e6e6e6" stroke-width="1.200" fill="none"><circle cx="7" cy="7" r="2.700" fill="#e6e6e6"/><path d="M7 0.800V3M7 11V13.200M0.800 7H3M11 7H13.200M2.600 2.600L4.200 4.200M11.400 2.600L9.800 4.200M2.600 11.400L4.200 9.800"/><path d="M10.500 10.500L14.500 14.500M14.500 11.800V14.500H11.800" stroke-width="1.100"/></g></svg>
<div class="abs" style="left:1750px;top:641px;width:142px;height:19px;background:#4b4b4b;"></div>
<span class="t" id="t34" style="left:1757px;top:645.2px;font-size:10.5px;color:#e0e0e0;letter-spacing:-0.118px;">Бесконечный свет ^0</span>
<div class="abs" style="left:1696px;top:660px;width:196px;height:1px;background:#262626;"></div>
</body></html>
